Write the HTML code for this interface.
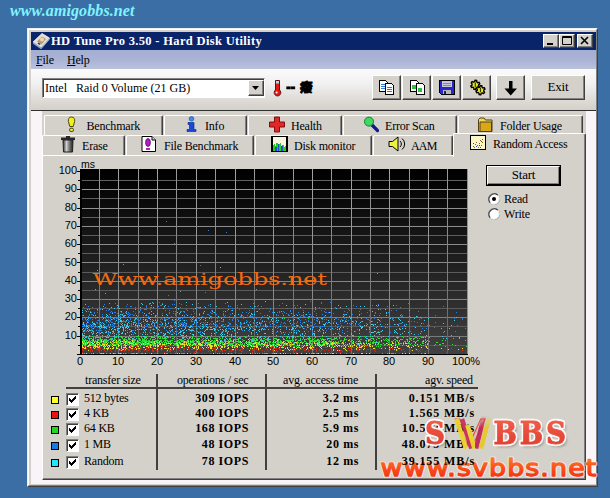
<!DOCTYPE html>
<html><head><meta charset="utf-8"><title>HD Tune Pro 3.50 - Hard Disk Utility</title>
<style>
html,body{margin:0;padding:0}
body{width:610px;height:498px;overflow:hidden;background:#3b6ea5;position:relative;font-family:"Liberation Serif",serif;font-size:12px;color:#000;line-height:14px;letter-spacing:-0.2px}
div,span{position:absolute;box-sizing:border-box;white-space:nowrap}
svg{position:absolute;overflow:visible}
.top{left:10px;top:1px;font:italic bold 16px/20px "Liberation Serif",serif;color:#7ff4ff;letter-spacing:0.1px}
.win{left:27px;top:28px;width:571px;height:459px;background:#d4d1ca;border:1px solid;border-color:#eeeef2 #404040 #404040 #eeeef2}
.win2{left:0;top:0;width:569px;height:457px;border:1px solid;border-color:#fff #808080 #808080 #fff}
.title{left:31px;top:32px;width:565px;height:18px;background:#0a246a;color:#fff;font:bold 12.5px/18px "Liberation Serif",serif;letter-spacing:0.33px}
.tbtn{top:34px;width:16px;height:14px;background:#d4d1ca;border:1px solid;border-color:#fff #404040 #404040 #fff;box-shadow:inset -1px -1px 0 #808080}
.menu{left:31px;top:50px;width:565px;height:19px;background:linear-gradient(#a4aed2,#aab4d6 55%,#bac2de)}
.tool{left:31px;top:69px;width:565px;height:41px;background:linear-gradient(#fbfbfb 0%,#f1f1f1 35%,#e3e1dd 65%,#d3d0c9 100%)}
.client{left:31px;top:110px;width:565px;height:374px;background:#f8f4f8;border-top:1px solid #303030}
.btn{background:#d4d1ca;border:1px solid;border-color:#fff #404040 #404040 #fff;box-shadow:inset -1px -1px 0 #808080}
.combo{left:42px;top:78px;width:223px;height:20px;background:#fff;border:1px solid;border-color:#808080 #fff #fff #808080;box-shadow:inset 1px 1px 0 #404040}
.tab{height:21px;background:#d4d1ca;border:1px solid;border-color:#fff #404040 transparent #fff;border-bottom:none;border-radius:2px 2px 0 0;box-shadow:inset -1px 0 0 #808080}
.tab span{top:3px}
.panel{left:42px;top:155px;width:544px;height:325px;background:#d4d1ca;border:1px solid;border-color:#fff #404040 #404040 #fff;box-shadow:inset -1px -1px 0 #808080}
.yl{letter-spacing:0;left:49px;width:28px;text-align:right;font:11px/14px "Liberation Sans",sans-serif}
.xl{letter-spacing:0;top:354px;width:30px;text-align:center;font:11px/14px "Liberation Sans",sans-serif}
.sq{left:51px;width:8px;height:8px;border:1px solid #000}
.cb{left:66px;width:13px;height:13px;background:#fff;border:1px solid;border-color:#808080 #fff #fff #808080;box-shadow:inset 1px 1px 0 #404040}
.lbl{left:84px}
.b{font-weight:bold;text-align:right;letter-spacing:0.6px;z-index:5}
.hd{top:373px}
</style></head><body>
<div class="top">www.amigobbs.net</div>
<div class="win"><div class="win2"></div></div>
<div class="title"><span style="left:20px">HD Tune Pro 3.50 - Hard Disk Utility</span></div>
<div class="tbtn" style="left:543px"><svg width="14" height="12" style="left:0;top:0"><path d="M3 8h6v2H3z" fill="#000"/></svg></div>
<div class="tbtn" style="left:559px"><svg width="14" height="12" style="left:0;top:0"><path d="M2.5 1.5h9v8h-9z M2 2.5h10" fill="none" stroke="#000"/></svg></div>
<div class="tbtn" style="left:577px"><svg width="14" height="12" style="left:0;top:0"><path d="M3 2l7 7M10 2l-7 7" stroke="#000" stroke-width="1.6" fill="none"/></svg></div>
<svg width="20" height="18" style="left:32px;top:32px"><path d="M1 10L10 1.500l7.500 4.500-8.500 9.500z" fill="#e4e0d4" stroke="#f4f4f4" stroke-width=".8"/><path d="M1 10l8 5.500v1.800l-8-5.500z" fill="#88a0d0"/><path d="M9 15.500l8.500-9.500v1.800l-8.500 9.500z" fill="#a8b8d8"/><path d="M5 9.500l5-5 4 2.500-4.500 5.500z" fill="#b89870"/><circle cx="10" cy="7.500" r="2" fill="#e8d8c0"/><path d="M6 11l2 1.500" stroke="#203040" stroke-width="1.500"/></svg>
<div class="menu"><span style="left:5px;top:3px"><u>F</u>ile</span><span style="left:36px;top:3px"><u>H</u>elp</span></div>
<div class="tool"></div>
<div class="client"></div>
<div class="combo"><span style="left:2px;top:2px;letter-spacing:0">Intel&nbsp;&nbsp; Raid 0 Volume (21 GB)</span><div class="btn" style="left:205px;top:1px;width:16px;height:16px"><svg width="14" height="14" style="left:0;top:0"><path d="M3 5h7l-3.5 4z" fill="#000"/></svg></div></div>
<svg width="11" height="18" style="left:272px;top:79px"><path d="M3.500 1.500h4v9.500a3.300 3.300 0 1 1-4 0z" fill="#e01818" stroke="#601010" stroke-width="1"/><path d="M4 2h3v2.500H4z" fill="#a8d8f0"/><circle cx="4.600" cy="13.500" r="1" fill="#fff"/></svg>
<span style="left:286px;top:80px;font:bold 15px/14px 'Liberation Serif',serif;letter-spacing:-0.6px;-webkit-text-stroke:0.4px #000;transform:scaleY(1.7);transform-origin:0 8.500px">--</span>
<span style="left:300px;top:80px;font:bold 12.500px/14px 'Noto Sans CJK TC','Noto Sans CJK SC',sans-serif;letter-spacing:0;-webkit-text-stroke:0.9px #000">癈</span>

<div class="btn" style="left:372px;top:75px;width:29px;height:25px"><svg width="17" height="16" style="left:5px;top:4px" shape-rendering="crispEdges"><path d="M1.5 .5h6l2 2v9h-8z" fill="#fff" stroke="#000"/><path d="M3 4h5M3 6h5M3 8h5" stroke="#2a7be0"/><path d="M7.500 3.500h6l2 2v9h-8z" fill="#fff" stroke="#000"/><path d="M9 7h5M9 9h5M9 11h5" stroke="#2a7be0"/></svg></div>
<div class="btn" style="left:402px;top:75px;width:29px;height:25px"><svg width="17" height="16" style="left:6px;top:4px" shape-rendering="crispEdges"><path d="M1.500 .5h6l2 2v9h-8z" fill="#fff" stroke="#000"/><path d="M3 5h4v4H3z" fill="#30c040"/><path d="M7.500 3.500h6l2 2v9h-8z" fill="#fff" stroke="#000"/><path d="M9 8h4v4H9z" fill="#30c040"/></svg></div>
<div class="btn" style="left:432px;top:75px;width:29px;height:25px"><svg width="16" height="16" style="left:6px;top:4px" shape-rendering="crispEdges"><path d="M.5 .5h15v14h-13l-2-2z" fill="#2828c8" stroke="#000"/><path d="M3 1h10v6H3z" fill="#c8c8d8"/><path d="M4 3h8M4 5h8" stroke="#8888a0"/><path d="M4 10h8v4H4z" fill="#b8b8b8"/><path d="M5 11h2v3H5z" fill="#202060"/></svg></div>
<div class="btn" style="left:462px;top:75px;width:29px;height:25px"><svg width="17" height="16" style="left:7px;top:4px"><g fill="#e8ec20" stroke="#000" stroke-width="1.400" stroke-linejoin="round"><path d="M8.5 5.9L9.4 6.9L8.4 8.3L7.1 7.6L6.0 8.1L5.6 9.5L3.9 9.3L3.8 7.9L2.9 7.1L1.5 7.5L0.8 5.9L2.0 5.1L2.1 3.9L1.2 2.9L2.2 1.5L3.5 2.2L4.6 1.7L5.0 0.3L6.7 0.5L6.8 1.9L7.7 2.7L9.1 2.3L9.8 3.9L8.6 4.7z"/><path d="M13.7 11.2L14.6 12.2L13.6 13.6L12.3 12.9L11.2 13.4L10.8 14.8L9.1 14.6L9.0 13.2L8.1 12.4L6.7 12.8L6.0 11.2L7.2 10.4L7.3 9.2L6.4 8.2L7.4 6.8L8.7 7.5L9.8 7.0L10.2 5.6L11.9 5.8L12.0 7.2L12.9 8.0L14.3 7.6L15.0 9.2L13.8 10.0z"/></g><path d="M5.300 2.500v4.500M10.500 7.800v4.500" stroke="#403800" stroke-width="1.200"/></svg></div>
<div class="btn" style="left:496px;top:75px;width:29px;height:25px"><svg width="14" height="15" style="left:7px;top:5px"><path d="M5 0h3.500v7.500H13L6.700 14.500 .5 7.500H5z" fill="#000"/></svg></div>
<div class="btn" style="left:531px;top:75px;width:54px;height:25px;text-align:center;line-height:22px;font-size:13px">Exit</div>

<div style="left:42px;top:111px;width:544px;height:46px;background:#d4d1ca"></div>
<!-- tabs row 1 -->
<div class="tab" style="left:44px;top:115px;width:119px"><svg width="9" height="16" style="left:22px;top:0"><path d="M4.500 1C7 1 8 3 7.600 5.500L6.200 10.500h-3.400L1.400 5.500C1 3 2 1 4.500 1z" fill="#f0f020" stroke="#484810"/><rect x="2.500" y="12.200" width="4" height="3.300" rx="1.500" fill="#f0f020" stroke="#484810"/></svg><span style="left:41.500px">Benchmark</span></div>
<div class="tab" style="left:164px;top:115px;width:83px"><svg width="11" height="16" style="left:21px;top:0"><circle cx="5.500" cy="2.800" r="2.300" fill="#3090f0" stroke="#1040a0" stroke-width=".6"/><path d="M2 6.500h6v7h2v2H1v-2h2.500v-5H2z" fill="#1848d8" stroke="#0a2080" stroke-width=".6"/></svg><span style="left:40px">Info</span></div>
<div class="tab" style="left:248px;top:115px;width:94px"><svg width="18" height="17" style="left:19px;top:0"><path d="M6.500 1h5v5h5v5h-5v5h-5v-5h-5v-5h5z" fill="#e02828" stroke="#801010"/></svg><span style="left:42px">Health</span></div>
<div class="tab" style="left:343px;top:115px;width:114px"><svg width="18" height="17" style="left:19px;top:0"><path d="M9 9l5.500 5.500" stroke="#101890" stroke-width="3.200" stroke-linecap="round"/><circle cx="6" cy="5.600" r="4.500" fill="#40d860" stroke="#108030"/></svg><span style="left:41px">Error Scan</span></div>
<div class="tab" style="left:458px;top:115px;width:125px"><svg width="17" height="16" style="left:18px;top:1px"><path d="M1.500 14.500v-12l1.500-1.500h4l1.500 2h6.500v11.500z" fill="#f0d860" stroke="#504010"/><path d="M3 5h11.500v9.500H3z" fill="#d8a818" stroke="#504010"/></svg><span style="left:41px">Folder Usage</span></div>
<!-- tabs row 2 -->
<div class="tab" style="left:42px;top:135px;width:83px"><svg width="16" height="17" style="left:17px;top:0"><defs><linearGradient id="tg"><stop offset="0" stop-color="#303030"/><stop offset=".35" stop-color="#d0d0d0"/><stop offset=".6" stop-color="#808080"/><stop offset="1" stop-color="#202020"/></linearGradient></defs><path d="M3 4h10l-.5 12h-9z" fill="url(#tg)" stroke="#202020"/><path d="M1 1.500h14v2.500H1z" fill="#282828"/><path d="M6 0h4v2H6z" fill="#282828"/></svg><span style="left:39px">Erase</span></div>
<div class="tab" style="left:126px;top:135px;width:128px"><svg width="16" height="17" style="left:14px;top:0"><path d="M1 .5h10l3.500 3.500v11.500H1z" fill="#fff" stroke="#000"/><path d="M11 .5v3.500h3.500" fill="#ddd" stroke="#000"/><ellipse cx="7" cy="6.500" rx="2.400" ry="4" fill="#b020c0" stroke="#500860" stroke-width=".8"/><rect x="5" y="12" width="4" height="2" fill="#b020c0"/></svg><span style="left:37px">File Benchmark</span></div>
<div class="tab" style="left:255px;top:135px;width:117px"><svg width="17" height="17" style="left:15px;top:0" shape-rendering="crispEdges"><path d="M1 .500h15v15H1z" fill="#f8f8d8" stroke="#000" stroke-width="1.400"/><path d="M2 15V9l2-1v2l1 1V7h2v4l2-4h1v4l1-2h2v2l2-2v6z" fill="#20d020"/><path d="M4 15v-4h2v4zM7 15V8h1v7zM10 15v-5h2v5z" fill="#2050d0"/></svg><span style="left:38px">Disk monitor</span></div>
<div class="tab" style="left:373px;top:135px;width:80px"><svg width="18" height="16" style="left:14px;top:0"><path d="M1 5.500h3.500L10 1v14L4.500 10.500H1z" fill="#f0f040" stroke="#000"/><path d="M12 5a4 4 0 0 1 0 6M14 2.500a7 7 0 0 1 0 11" fill="none" stroke="#000"/></svg><span style="left:37px;letter-spacing:-0.8px">AAM</span></div>
<div class="panel"></div>
<div class="tab" style="left:453px;top:133px;width:133px;height:24px;z-index:2"><svg width="16" height="16" style="left:16px;top:1px" shape-rendering="crispEdges"><path d="M.500 .500h15v14h-15z" fill="#fbf7c8" stroke="#000"/><path d="M3 11h1M5 9h1M4 12h1M7 10h1M6 7h1M8 12h1M9 8h1M10 5h1M11 10h1M12 7h1M10 12h1M12 4h1" stroke="#806020"/><path d="M3 8h1M6 11h1M9 10h1M11 6h1" stroke="#2040c0"/></svg><span style="left:39px;top:3px">Random Access</span></div>

<!-- chart -->
<span style="left:81px;top:158px;font:10.5px/12px 'Liberation Sans',sans-serif;letter-spacing:0">ms</span>
<div class="yl" style="top:328px">10</div><div class="yl" style="top:309px">20</div><div class="yl" style="top:291px">30</div><div class="yl" style="top:273px">40</div><div class="yl" style="top:255px">50</div><div class="yl" style="top:236px">60</div><div class="yl" style="top:218px">70</div><div class="yl" style="top:200px">80</div><div class="yl" style="top:181px">90</div><div class="yl" style="top:163px">100</div>
<div class="xl" style="left:65px">0</div><div class="xl" style="left:103px">10</div><div class="xl" style="left:142px">20</div><div class="xl" style="left:181px">30</div><div class="xl" style="left:220px">40</div><div class="xl" style="left:258px">50</div><div class="xl" style="left:297px">60</div><div class="xl" style="left:336px">70</div><div class="xl" style="left:374px">80</div><div class="xl" style="left:413px">90</div><div class="xl" style="left:451px">100%</div>
<div style="left:80px;top:169px;width:388px;height:186px;background:linear-gradient(#000 0%,#030303 6%,#1c1c1c 45%,#303030 75%,#424242 100%)"></div>
<svg width="388" height="186" style="left:80px;top:169px" shape-rendering="crispEdges">
<defs><linearGradient id="vg" gradientUnits="userSpaceOnUse" x1="0" y1="0" x2="0" y2="186"><stop offset="0" stop-color="#a2a2a2"/><stop offset=".6" stop-color="#8c8c8c"/><stop offset="1" stop-color="#747474"/></linearGradient><linearGradient id="vg2" gradientUnits="userSpaceOnUse" x1="0" y1="0" x2="0" y2="186"><stop offset="0" stop-color="#9a9a9a"/><stop offset=".6" stop-color="#7c7c7c"/><stop offset="1" stop-color="#606060"/></linearGradient></defs>
<path d="M0 176.5H388" stroke="#595959"/>
<path d="M0 167.5H388" stroke="#7b7b7b"/>
<path d="M0 157.5H388" stroke="#5a5a5a"/>
<path d="M0 148.5H388" stroke="#7f7f7f"/>
<path d="M0 139.5H388" stroke="#5b5b5b"/>
<path d="M0 130.5H388" stroke="#828282"/>
<path d="M0 121.5H388" stroke="#5b5b5b"/>
<path d="M0 112.5H388" stroke="#858585"/>
<path d="M0 103.5H388" stroke="#5c5c5c"/>
<path d="M0 93.5H388" stroke="#888888"/>
<path d="M0 84.5H388" stroke="#5d5d5d"/>
<path d="M0 75.5H388" stroke="#8b8b8b"/>
<path d="M0 66.5H388" stroke="#5e5e5e"/>
<path d="M0 57.5H388" stroke="#8e8e8e"/>
<path d="M0 48.5H388" stroke="#5f5f5f"/>
<path d="M0 39.5H388" stroke="#919191"/>
<path d="M0 29.5H388" stroke="#606060"/>
<path d="M0 20.5H388" stroke="#959595"/>
<path d="M0 11.5H388" stroke="#616161"/>
<path d="M19.5 0V186" stroke="url(#vg2)"/>
<path d="M38.5 0V186" stroke="url(#vg)"/>
<path d="M58.5 0V186" stroke="url(#vg2)"/>
<path d="M77.5 0V186" stroke="url(#vg)"/>
<path d="M96.5 0V186" stroke="url(#vg2)"/>
<path d="M116.5 0V186" stroke="url(#vg)"/>
<path d="M135.5 0V186" stroke="url(#vg2)"/>
<path d="M155.5 0V186" stroke="url(#vg)"/>
<path d="M174.5 0V186" stroke="url(#vg2)"/>
<path d="M193.5 0V186" stroke="url(#vg)"/>
<path d="M213.5 0V186" stroke="url(#vg2)"/>
<path d="M232.5 0V186" stroke="url(#vg)"/>
<path d="M251.5 0V186" stroke="url(#vg2)"/>
<path d="M271.5 0V186" stroke="url(#vg)"/>
<path d="M290.5 0V186" stroke="url(#vg2)"/>
<path d="M309.5 0V186" stroke="url(#vg)"/>
<path d="M329.5 0V186" stroke="url(#vg2)"/>
<path d="M348.5 0V186" stroke="url(#vg)"/>
<path d="M367.5 0V186" stroke="url(#vg2)"/>
<path d="M-3 185.5h3M-2 176.5h2M-3 167.5h3M-2 157.5h2M-3 148.5h3M-2 139.5h2M-3 130.5h3M-2 121.5h2M-3 112.5h3M-2 103.5h2M-3 93.5h3M-2 84.5h2M-3 75.5h3M-2 66.5h2M-3 57.5h3M-2 48.5h2M-3 39.5h3M-2 29.5h2M-3 20.5h3M-2 11.5h2M-3 2.5h3" stroke="#000"/>
<path d="M387.5 0V186" stroke="#909090"/>
<path d="M.5 0V186M1.500 0V186M0 185.5H388" stroke="#000"/>
<g stroke-width="1" fill="none" transform="translate(0,0.5)">
<path d="M50 145h1M232 163h1M27 157h1M143 158h1M256 154h1M53 142h1M214 136h1M136 137h1M91 158h1M335 158h1M180 156h1M32 150h1M166 143h1M260 152h1M13 163h1M134 148h1M131 149h1M21 154h1M119 151h1M34 157h1M9 156h1M180 150h1M286 154h1M24 155h1M346 159h1M311 141h1M36 151h1M113 142h1M84 150h1M168 161h1M289 163h1M26 158h1M58 154h1M55 158h1M293 155h1M139 139h1M94 74h1M23 164h1M246 161h1M193 147h1M236 146h1M15 156h1M125 161h1M136 155h1M122 147h1M33 156h1M271 152h1M55 153h1M19 141h1M294 149h1M305 155h1M53 154h1M192 160h1M93 144h1M160 158h1M37 160h1M212 155h1M60 148h1M115 151h1M149 165h1M219 150h1M42 146h1M143 146h1M239 158h1M53 161h1M160 154h1M193 157h1M66 137h1M26 148h1M377 156h1M46 143h1M80 150h1M209 163h1M61 157h1M196 156h1M20 139h1M236 149h1M17 158h1M59 142h1M33 154h1M173 134h1M260 151h1M71 164h1M279 154h1M64 148h1M189 153h1M65 148h1M154 160h1M12 164h1M185 160h1M153 149h1M16 157h1M95 144h1M168 144h1M255 159h1M4 162h1M7 148h1M231 147h1M26 141h1M145 155h1M141 163h1M223 146h1M149 150h1M150 137h1M137 156h1M171 165h1M6 162h1M169 141h1M294 155h1M262 161h1M96 163h1M264 149h1M106 155h1M95 146h1M313 149h1M118 157h1M119 149h1M40 154h1M10 148h1M105 157h1M69 156h1M163 158h1M149 159h1M222 154h1M36 149h1M339 150h1M58 158h1M72 154h1M125 123h1M125 153h1M178 157h1M100 149h1M245 155h1M8 160h1M140 158h1M58 155h1M242 145h1M148 159h1M38 151h1M86 150h1M125 156h1M129 160h1M321 154h1M2 157h1M94 154h1M96 159h1M17 154h1M61 139h1M259 165h1M54 150h1M124 154h1M34 143h1M265 145h1M41 153h1M186 157h1M239 138h1M41 143h1M17 141h1M92 161h1M214 154h1M121 153h1M13 156h1M102 157h1M227 155h1M24 158h1M78 137h1M179 140h1M217 149h1M28 150h1M118 134h1M273 152h1M171 145h1M30 163h1M85 153h1M29 158h1M86 161h1M250 143h1M65 146h1M102 155h1M277 160h1M14 144h1M168 155h1M264 145h1M98 149h1M220 147h1M75 150h1M51 137h1M60 141h1M291 149h1M161 147h1M101 135h1M49 163h1M42 156h1M209 146h1M135 144h1M43 152h1M338 142h1M106 136h1M273 136h1M42 157h1M13 154h1M61 153h1M136 152h1M234 142h1M237 152h1M85 156h1M84 149h1M29 145h1M281 149h1M77 139h1M47 135h1M129 146h1M151 141h1M47 161h1M66 150h1M37 163h1M30 156h1M30 149h1M40 147h1M295 143h1M287 143h1M111 156h1M29 153h1M22 145h1M20 157h1M107 141h1M90 163h1M130 154h1M32 162h1M175 156h1M48 143h1M24 135h1M31 153h1M173 157h1M13 155h1M89 143h1M86 158h1M136 145h1M183 156h1M104 157h1M98 140h1M235 157h1M120 138h1M231 153h1M241 133h1M35 146h1M169 143h1M152 151h1M217 136h1M144 147h1M17 153h1M157 158h1M244 142h1M118 138h1M201 163h1M185 154h1M58 153h1M385 159h1M52 163h1M104 142h1M17 143h1M213 141h1M211 156h1M289 141h1M80 136h1M132 144h1M251 155h1M139 154h1M132 152h1M47 140h1M158 152h1M88 153h1M12 162h1M133 155h1M32 157h1M7 152h1M292 152h1M119 158h1M162 161h1M137 149h1M225 157h1M279 148h1M297 150h1M31 142h1M128 136h1M267 143h1M262 152h1M47 155h1M322 157h1M22 150h1M90 158h1M156 155h1M155 162h1M180 148h1M152 150h1M217 148h1M103 151h1M149 154h1M112 157h1M166 151h1M102 153h1M223 153h1M106 156h1M307 158h1M281 144h1M157 136h1M13 148h1M244 150h1M11 158h1M22 153h1M25 138h1M363 137h1M100 161h1M2 143h1M237 157h1M84 138h1M108 157h1M161 145h1M297 137h1M97 162h1M70 164h1M111 151h1M54 153h1M125 138h1M340 156h1M60 164h1M143 142h1M55 150h1M30 152h1M118 149h1M245 140h1M275 156h1M3 157h1M241 134h1M93 151h1M119 163h1M47 145h1M40 150h1M330 162h1M193 154h1M110 150h1M210 142h1M24 148h1M60 149h1M289 146h1M230 153h1M295 144h1M222 146h1M158 160h1M184 146h1M210 141h1M12 138h1M179 153h1M111 160h1M225 150h1M49 160h1M85 150h1M191 150h1M19 147h1M208 146h1M99 152h1M186 156h1M95 145h1M76 152h1M322 147h1M343 154h1M66 140h1M64 154h1M261 150h1M374 149h1M30 151h1M99 144h1M20 156h1M92 162h1M86 52h1M45 159h1M177 153h1M170 147h1M150 159h1M32 153h1M172 158h1M10 149h1M162 148h1M183 157h1M170 137h1M287 139h1M153 157h1M69 155h1M97 151h1M236 144h1M76 164h1M124 157h1M29 148h1M10 157h1M281 157h1M250 133h1M88 149h1M169 147h1M45 161h1M349 156h1M31 160h1M123 157h1M12 159h1M29 160h1M11 145h1M105 156h1M113 140h1M112 165h1M318 155h1M67 156h1M179 154h1M123 150h1M111 152h1M234 155h1M116 155h1M277 147h1M80 155h1M57 147h1M331 152h1M258 157h1M39 146h1M41 151h1M314 161h1M148 153h1M12 152h1M173 154h1M235 154h1M197 159h1M63 152h1M111 145h1M2 150h1M218 156h1M228 158h1M59 154h1M20 155h1M136 158h1M174 154h1M180 155h1M236 151h1M197 143h1M86 155h1M311 148h1M75 158h1M47 157h1M8 142h1M2 146h1M28 147h1M30 143h1M316 141h1M157 138h1M154 146h1M207 139h1M273 156h1M131 152h1M112 160h1M74 154h1M167 155h1M181 149h1M67 154h1M173 159h1M35 152h1M142 155h1M66 145h1M244 147h1M23 137h1M316 136h1M50 150h1M99 156h1M287 150h1M157 156h1M25 151h1M52 145h1M279 146h1M196 153h1M216 156h1M176 163h1M6 142h1M133 143h1M301 149h1M37 144h1M6 158h1M292 148h1M279 156h1M14 143h1M163 154h1M80 152h1M315 155h1M355 153h1M279 142h1M199 136h1M348 156h1M180 144h1M175 137h1M48 151h1M5 150h1M204 143h1M343 148h1M114 151h1M106 140h1M67 151h1M219 145h1M165 139h1M74 155h1M71 158h1M6 151h1M46 148h1M125 155h1M292 136h1M66 146h1M111 139h1M26 157h1M237 151h1M220 153h1M307 137h1M300 144h1M64 158h1M159 140h1M275 155h1M142 152h1M179 162h1M96 140h1M201 153h1M28 163h1M192 143h1M55 152h1M134 160h1M44 147h1M48 158h1M176 149h1M205 157h1M16 153h1M123 156h1M170 152h1M214 150h1M85 152h1M267 162h1M246 150h1M71 138h1M264 142h1M99 145h1M220 158h1M104 147h1M354 158h1M35 161h1M94 148h1M324 155h1M184 152h1M33 162h1M41 157h1M38 161h1M187 139h1M11 160h1M37 139h1M11 161h1M69 158h1M172 147h1M286 149h1M143 162h1M85 155h1M127 159h1M99 155h1M79 155h1M100 151h1M264 146h1M205 163h1M14 148h1M190 139h1M4 155h1M125 148h1M77 153h1M347 156h1M158 151h1M275 162h1M251 148h1M263 151h1M72 156h1M39 163h1M119 139h1M178 148h1M117 162h1M131 144h1M72 160h1M48 153h1M137 160h1M152 139h1M382 149h1M223 147h1M94 155h1M51 155h1M169 162h1M89 141h1M206 159h1M129 149h1M57 158h1M206 160h1M65 162h1M98 155h1M181 160h1M59 143h1M25 149h1M63 158h1M54 163h1M66 157h1M312 150h1M59 157h1M71 136h1M119 157h1M23 158h1M113 149h1M7 156h1M232 142h1M128 145h1M8 147h1M177 137h1M273 153h1M114 162h1M3 155h1M147 157h1M213 154h1M300 162h1M212 166h1M106 151h1M55 159h1M174 143h1M226 160h1M169 160h1M238 150h1M253 144h1M272 145h1M100 142h1M77 157h1M29 163h1M55 138h1M208 150h1M117 138h1M32 143h1M302 148h1M48 145h1M176 158h1M55 140h1M175 121h1M199 142h1M45 152h1M264 153h1M190 152h1M82 150h1M222 158h1M255 138h1M120 163h1M73 159h1M94 131h1M215 139h1M56 146h1M103 161h1M62 143h1M88 126h1M38 158h1M256 149h1M216 158h1M163 147h1M154 147h1M19 155h1M310 157h1M246 143h1M66 138h1M22 158h1M79 133h1M57 150h1M70 152h1M21 161h1M143 152h1M95 150h1M268 151h1M87 163h1M53 146h1M39 152h1M96 158h1M123 143h1M81 149h1M28 164h1M127 145h1M313 148h1M272 154h1M143 144h1M167 152h1M24 159h1M5 159h1M17 140h1M8 156h1M188 150h1M103 155h1M149 155h1M16 164h1M338 165h1M18 161h1M221 146h1M102 156h1M8 153h1M121 149h1M49 152h1M241 141h1M223 145h1M132 141h1M141 156h1M99 134h1M276 137h1M116 148h1M43 144h1M112 158h1M148 136h1M14 158h1M68 144h1M196 163h1M258 150h1M164 154h1M56 156h1M195 152h1M309 156h1M170 155h1M82 134h1M49 154h1M164 153h1M203 142h1M91 147h1M95 142h1M49 146h1M269 141h1M45 143h1M238 148h1M337 153h1M49 156h1M6 155h1M376 143h1M51 156h1M46 156h1M92 135h1M56 148h1M220 155h1M329 147h1M181 153h1M181 161h1M60 140h1M228 162h1M247 154h1M220 151h1M25 152h1M289 153h1M11 143h1M131 155h1M145 134h1M26 150h1M228 143h1M188 84h1M116 158h1M190 155h1M147 141h1M150 154h1M89 144h1M146 63h1M121 148h1M170 158h1M300 152h1M184 159h1M68 158h1M226 148h1M95 153h1M176 153h1M60 150h1M45 153h1M28 156h1M130 137h1M207 151h1M232 159h1M194 155h1M41 145h1M17 151h1M186 152h1M12 150h1M322 146h1M298 135h1M248 159h1M100 138h1M173 153h1M277 149h1M91 153h1M123 153h1M6 154h1M46 152h1M12 145h1M310 163h1M74 157h1M232 157h1M4 157h1M72 153h1M128 148h1M9 140h1M69 134h1M68 149h1M190 140h1M92 151h1M76 146h1M131 141h1M233 147h1M250 154h1M202 144h1M150 145h1M69 135h1M119 144h1M242 150h1M53 165h1M136 157h1M228 147h1M64 159h1M224 147h1M228 156h1M135 158h1M10 142h1M189 142h1M15 149h1M120 156h1M21 157h1M87 150h1M170 156h1M288 150h1M50 149h1M363 163h1M231 156h1M63 146h1M342 159h1M355 146h1M143 145h1M69 143h1M28 141h1M45 155h1M215 138h1M375 162h1M146 162h1M382 150h1M111 162h1M29 151h1M256 153h1M12 155h1M25 148h1M178 136h1M302 157h1M25 161h1M300 140h1M299 146h1M220 165h1M233 157h1M225 145h1M155 159h1M44 152h1M62 158h1M261 156h1M26 153h1M209 152h1M112 152h1M88 137h1M253 153h1M11 156h1M101 154h1M66 136h1M8 151h1M219 158h1M289 159h1M102 149h1M143 151h1M281 152h1M5 149h1M128 61h1M120 162h1M81 156h1M93 142h1M266 150h1M9 145h1M69 144h1M51 154h1M114 144h1M148 137h1M64 144h1M161 154h1M5 160h1M334 157h1M167 146h1M160 156h1M246 153h1M23 154h1M94 135h1M35 154h1M20 148h1M50 137h1M119 146h1M131 147h1M260 154h1M250 157h1M12 157h1M50 160h1M20 161h1M177 142h1M116 139h1M35 143h1M65 157h1M93 163h1M198 146h1M19 151h1M234 150h1M176 154h1M157 150h1M9 146h1M81 153h1M217 153h1M18 163h1M95 154h1M341 157h1M250 147h1M55 144h1M114 154h1M54 146h1M254 152h1M204 156h1M80 163h1M280 156h1M223 141h1M208 145h1M163 149h1M142 162h1M10 143h1M224 159h1M3 159h1M65 140h1M5 161h1M242 157h1M190 157h1M33 161h1M141 152h1M66 155h1M344 161h1M116 153h1M34 150h1M110 156h1M30 155h1M77 155h1M124 137h1M40 142h1M161 155h1M104 146h1M176 142h1M115 148h1M110 147h1M211 161h1M43 162h1M35 134h1M128 158h1M236 157h1M248 153h1M216 154h1M70 160h1M240 158h1M81 136h1M186 158h1M262 163h1M217 152h1M52 161h1M159 148h1M182 152h1M245 143h1M129 157h1M152 162h1M120 96h1M228 151h1M230 132h1M77 146h1M22 147h1M150 155h1M218 143h1M289 151h1M14 155h1M71 155h1M37 148h1M255 156h1M28 155h1M3 138h1M244 157h1M321 147h1M134 159h1M198 158h1M169 153h1M51 157h1M183 139h1M149 147h1M199 157h1M82 155h1M230 156h1M82 144h1M34 149h1M134 155h1M59 151h1M230 145h1M198 157h1M180 154h1M105 154h1M139 151h1M298 162h1M112 155h1M40 158h1M267 159h1M278 155h1M235 148h1M184 160h1M162 143h1M101 142h1M320 138h1M253 160h1M89 161h1M46 137h1M74 160h1M9 160h1M161 158h1M37 149h1M49 144h1M216 161h1M34 155h1M103 154h1M70 138h1M2 149h1M276 153h1M257 155h1M221 157h1M68 147h1M6 159h1M58 151h1M213 145h1M242 152h1M204 153h1M111 149h1M109 161h1M16 161h1M319 160h1M147 156h1M269 154h1M104 155h1M258 155h1M336 147h1M206 144h1M212 147h1M10 155h1M203 154h1M255 149h1M75 153h1M229 145h1M267 157h1M70 140h1M103 142h1M42 152h1M43 146h1M145 161h1M143 150h1M72 150h1M119 138h1M201 164h1M226 152h1M181 137h1M77 148h1M160 155h1M37 154h1M38 140h1M104 143h1M123 155h1M176 156h1M137 151h1M179 158h1M113 159h1M3 161h1M30 164h1M248 143h1M140 148h1M20 140h1M48 147h1M88 163h1M102 161h1M87 162h1M104 160h1M242 160h1M129 155h1M191 151h1M76 153h1M196 146h1M205 154h1M328 134h1M182 147h1M135 166h1M320 154h1M321 145h1M259 162h1M85 141h1M173 149h1M2 141h1M143 155h1M79 139h1M240 162h1M160 147h1M109 160h1M268 140h1M91 156h1M99 149h1M142 156h1M187 149h1M110 157h1M64 161h1M90 139h1M228 152h1M270 155h1M196 145h1M232 147h1M308 143h1M40 145h1M5 141h1M216 145h1M341 149h1M106 145h1M280 140h1M71 154h1M7 153h1M33 148h1M107 157h1M18 151h1M100 154h1M61 159h1M240 157h1M8 137h1M148 157h1M6 156h1M64 140h1M47 154h1M182 151h1M334 152h1M199 143h1M337 147h1M199 148h1M32 155h1M114 152h1M133 159h1M265 151h1M130 143h1M319 154h1M237 161h1M162 146h1M2 155h1M200 155h1M29 140h1M84 151h1M37 138h1M202 134h1M69 163h1M145 146h1M43 151h1M289 162h1M147 148h1M181 154h1M312 149h1M298 160h1M117 159h1M171 147h1M275 151h1M181 159h1M89 149h1M287 148h1M99 151h1" stroke="#2a80e0"/>
<path d="M147 163h1M42 158h1M12 167h1M148 171h1M104 168h1M301 172h1M44 156h1M34 164h1M34 154h1M38 147h1M90 162h1M189 147h1M335 158h1M174 160h1M316 160h1M99 174h1M22 166h1M169 160h1M5 175h1M138 161h1M196 177h1M216 163h1M170 155h1M320 146h1M181 171h1M293 163h1M78 160h1M27 146h1M38 137h1M38 177h1M271 175h1M177 142h1M40 152h1M71 176h1M54 163h1M38 162h1M306 143h1M340 164h1M210 154h1M212 169h1M45 168h1M214 157h1M220 138h1M174 137h1M39 165h1M11 156h1M155 159h1M281 158h1M243 163h1M157 168h1M242 167h1M36 151h1M112 168h1M235 138h1M29 134h1M85 164h1M101 162h1M26 147h1M71 168h1M71 167h1M10 161h1M224 162h1M8 149h1M40 149h1M99 163h1M43 161h1M13 164h1M26 176h1M85 154h1M211 163h1M362 167h1M214 148h1M293 169h1M206 158h1M161 160h1M172 145h1M179 153h1M51 173h1M180 167h1M101 159h1M107 171h1M83 139h1M23 156h1M106 133h1M82 135h1M122 155h1M280 153h1M227 155h1M73 163h1M324 156h1M127 158h1M308 170h1M234 166h1M140 165h1M42 168h1M55 155h1M7 140h1M116 151h1M209 175h1M289 160h1M135 153h1M297 163h1M260 138h1M55 164h1M98 139h1M3 146h1M23 149h1M116 159h1M40 158h1M286 171h1M250 172h1M302 161h1M76 153h1M31 150h1M299 163h1M60 138h1M74 164h1M117 153h1M245 146h1M5 174h1M6 167h1M320 160h1M237 149h1M243 155h1M7 159h1M92 160h1M13 154h1M51 165h1M290 165h1M7 153h1M2 160h1M152 159h1M225 170h1M67 152h1M126 160h1M224 153h1M318 156h1M153 159h1M111 157h1M208 167h1M341 162h1M21 157h1M252 159h1M28 168h1M213 167h1M195 158h1M141 149h1M271 164h1M49 175h1M87 167h1M90 156h1M63 152h1M83 164h1M291 155h1M181 167h1M92 158h1M214 146h1M94 153h1M329 141h1M6 142h1M23 137h1M74 166h1M134 164h1M130 172h1M86 167h1M79 158h1M222 167h1M232 160h1M102 168h1M99 170h1M210 151h1M166 153h1M298 136h1M182 159h1M39 139h1M62 173h1M369 159h1M15 155h1M242 149h1M46 144h1M239 161h1M205 174h1M64 176h1M126 169h1M183 160h1M289 158h1M228 167h1M74 154h1M43 147h1M84 166h1M210 172h1M263 158h1M108 160h1M87 168h1M87 148h1M120 150h1M154 146h1M325 159h1M143 167h1M170 159h1M225 135h1M34 139h1M146 169h1M39 162h1M94 164h1M27 171h1M56 149h1M13 146h1M25 167h1M18 157h1M343 168h1M136 137h1M299 169h1M24 158h1M55 140h1M136 163h1M48 158h1M289 170h1M14 155h1M38 146h1M15 157h1M150 172h1M245 163h1M7 150h1M144 165h1M239 152h1M79 172h1M116 172h1M116 170h1M100 175h1M7 161h1M82 154h1M263 147h1M131 164h1M188 169h1M209 160h1M240 169h1M72 170h1M379 168h1M295 155h1M203 146h1M64 167h1M56 146h1M148 162h1M284 137h1M38 159h1M59 160h1M292 163h1M11 169h1M103 161h1M168 166h1M219 162h1M310 149h1M256 139h1M65 151h1M25 163h1M97 171h1M214 173h1M275 154h1M98 150h1M182 174h1M151 166h1M282 158h1M242 166h1M193 170h1M57 157h1M185 156h1M95 159h1M51 161h1M154 161h1M86 145h1M257 160h1M127 160h1M227 158h1M62 165h1M32 169h1M140 160h1M371 166h1M2 165h1M3 154h1M155 171h1M74 168h1M29 166h1M281 159h1M331 164h1M266 145h1M55 149h1M244 155h1M20 164h1M69 173h1M55 171h1M269 170h1M70 134h1M70 148h1M212 167h1M73 172h1M155 167h1M10 143h1M259 160h1M100 143h1M315 175h1M147 170h1M105 158h1M85 151h1M95 153h1M142 165h1M192 164h1M12 153h1M79 161h1M26 159h1M142 163h1M161 159h1M106 161h1M84 137h1M49 170h1M164 161h1M41 155h1M152 141h1M12 173h1M222 157h1M43 158h1M301 168h1M147 133h1M197 162h1M305 158h1M20 153h1M66 146h1M262 151h1M63 160h1M24 172h1M30 147h1M317 155h1M124 165h1M297 148h1M78 165h1M63 170h1M325 157h1M222 165h1M216 156h1M169 169h1M184 164h1M42 164h1M51 162h1M271 160h1M17 170h1M298 163h1M64 144h1M281 174h1M63 167h1M69 174h1M71 155h1M123 167h1M42 145h1M175 160h1M26 145h1M374 151h1M126 173h1M334 149h1M38 153h1M191 150h1M95 156h1M128 170h1M74 163h1M7 157h1M81 163h1M135 156h1M235 140h1M293 156h1M63 163h1M61 157h1M105 167h1M134 143h1M49 160h1M26 168h1M84 159h1M307 155h1M53 155h1M73 138h1M279 168h1M232 165h1M27 166h1M294 171h1M3 153h1M73 144h1M286 167h1M90 168h1M80 167h1M300 155h1M150 160h1M125 172h1M35 160h1M177 171h1M160 169h1M23 154h1M295 162h1M87 146h1M155 164h1M4 156h1M186 170h1M26 163h1M182 152h1M232 171h1M246 167h1M98 153h1M218 161h1M84 158h1M235 167h1M91 165h1M46 157h1M69 149h1M301 157h1M115 151h1M43 160h1M192 160h1M324 162h1M225 164h1M38 172h1M85 156h1M296 164h1M37 161h1M105 170h1M2 170h1M212 159h1M207 168h1M271 158h1M75 147h1M52 172h1M280 167h1M327 170h1M187 157h1M255 169h1M131 160h1M334 165h1M313 136h1M266 152h1M145 142h1M41 167h1M21 163h1M121 173h1M12 161h1M21 156h1M55 150h1M73 160h1M22 140h1M38 144h1M4 169h1M202 149h1M64 158h1M342 168h1M346 172h1M239 167h1M243 164h1M90 175h1M31 160h1M188 160h1M281 149h1M30 169h1M132 142h1M282 152h1M140 171h1M61 134h1M41 142h1M85 165h1M62 135h1M274 162h1M120 165h1M239 154h1M124 164h1M98 173h1M45 165h1M248 151h1M22 163h1M258 136h1M341 154h1M123 164h1M270 149h1M122 163h1M45 164h1M294 162h1M112 135h1M160 157h1M22 174h1M33 163h1M104 163h1M227 156h1M212 158h1M151 165h1M164 158h1M214 163h1M17 140h1M319 159h1M101 166h1M68 172h1M154 167h1M65 160h1M53 153h1M74 156h1M348 149h1M174 151h1M139 158h1M294 166h1M17 163h1M131 166h1M234 162h1M95 150h1M171 164h1M66 160h1M64 161h1M250 160h1M174 145h1M165 148h1M255 175h1M123 158h1M113 155h1M157 163h1M335 168h1M137 152h1M220 166h1M24 155h1M230 160h1M254 177h1M308 167h1M88 163h1M196 170h1M83 172h1M84 148h1M99 160h1M171 157h1M102 166h1M172 172h1M65 163h1M124 142h1M344 161h1M314 161h1M100 165h1M110 158h1M121 148h1M16 164h1M75 151h1M76 158h1M45 158h1M241 149h1M27 151h1M286 173h1M45 161h1M340 148h1M124 162h1M11 163h1M152 144h1M112 148h1M132 160h1M280 137h1M5 168h1M127 155h1M61 156h1M4 175h1M3 159h1M172 161h1M269 147h1M25 158h1M146 161h1M241 173h1M95 138h1M93 169h1M187 146h1M142 168h1M177 167h1M138 175h1M11 171h1M371 156h1M177 153h1M41 151h1M46 158h1M60 154h1M318 149h1M240 159h1M40 157h1M272 152h1M77 144h1M103 166h1M200 167h1M143 161h1M185 157h1M65 165h1M196 151h1M220 171h1M292 155h1M126 155h1M73 153h1M9 166h1M278 175h1M211 144h1M313 171h1M13 159h1M85 136h1M47 159h1M34 166h1M17 148h1M142 160h1M54 153h1M145 162h1M15 146h1M291 152h1M256 176h1M39 173h1M50 162h1M203 163h1M177 168h1M239 153h1M301 175h1M376 148h1M66 152h1M122 166h1M264 164h1M29 158h1M333 169h1M113 165h1M204 165h1M224 166h1M41 152h1M185 164h1M249 153h1M267 166h1M89 159h1M127 167h1M130 160h1M181 160h1M59 156h1M57 171h1M200 160h1M279 145h1M103 156h1M230 159h1M170 146h1M141 156h1M38 168h1M88 154h1M55 161h1M242 160h1M45 170h1M69 171h1M208 172h1M267 154h1M170 173h1M72 171h1M36 165h1M28 171h1M158 160h1M192 162h1M314 155h1M253 173h1M313 151h1M212 168h1M215 159h1M65 168h1M130 135h1M258 174h1M12 165h1M200 162h1M238 162h1M127 153h1M65 150h1M299 151h1M44 146h1M282 157h1M173 161h1M6 156h1M159 160h1M54 172h1M76 166h1M61 167h1M292 142h1M178 161h1M305 140h1M188 149h1M266 137h1M73 151h1M209 152h1M8 158h1M317 164h1M168 156h1M279 160h1M336 147h1M183 172h1M257 158h1M2 143h1M55 156h1M252 174h1M172 139h1M147 164h1M364 162h1M39 159h1M98 164h1M41 164h1M34 158h1M87 157h1M176 170h1M82 146h1M320 151h1M233 158h1M47 154h1M20 159h1M102 161h1M198 151h1M245 159h1M47 156h1M141 166h1M303 167h1M161 135h1M84 151h1M118 163h1M26 151h1M110 164h1M244 170h1M243 174h1M177 155h1M30 155h1M77 165h1M263 145h1M328 152h1M112 150h1M229 168h1M70 150h1M49 166h1M84 165h1M10 173h1M296 173h1M217 146h1M143 150h1M286 156h1M73 134h1M42 156h1M46 142h1M117 170h1M51 174h1M144 171h1M54 151h1M34 160h1M102 169h1M21 158h1M144 157h1M346 166h1M153 167h1M57 156h1M213 159h1M20 157h1M100 151h1M77 171h1M90 172h1M126 157h1M52 169h1M256 154h1M8 169h1M184 167h1M114 153h1M120 154h1M70 161h1M71 136h1M48 153h1M56 154h1M39 170h1M248 169h1M123 144h1M104 160h1M51 152h1M26 162h1M56 167h1M133 159h1M279 161h1M179 154h1M217 156h1M158 145h1M363 154h1M260 158h1M197 170h1M192 149h1M2 166h1M322 159h1M147 166h1M54 173h1M206 136h1M233 164h1M216 164h1M87 163h1M99 144h1M46 151h1M131 158h1M48 168h1M6 157h1M173 171h1M249 143h1M45 146h1M29 140h1M34 173h1M101 155h1M265 152h1M213 151h1M54 176h1M179 162h1M83 166h1M118 170h1M28 165h1M2 174h1M237 170h1M138 147h1M109 168h1M112 165h1M113 147h1M110 177h1M379 169h1M176 157h1M234 164h1M9 167h1M248 153h1M177 165h1M175 177h1M29 170h1M32 164h1M121 166h1M177 173h1M39 150h1M272 166h1M100 162h1M78 164h1M179 160h1M49 169h1M314 163h1M111 161h1M3 155h1M76 172h1M68 155h1M129 149h1M201 142h1M328 163h1M48 157h1M366 169h1M115 139h1M243 170h1M63 148h1M234 165h1M2 175h1M229 147h1M238 174h1M322 164h1M130 147h1M344 151h1M255 164h1M20 155h1M189 167h1M260 152h1M169 158h1M217 167h1M213 168h1M97 169h1M196 166h1M184 174h1M103 163h1M164 154h1M211 160h1M296 136h1M38 163h1M106 166h1M253 154h1M19 158h1M37 159h1M292 167h1M245 154h1M218 149h1M2 164h1M4 161h1M104 153h1M279 171h1M319 150h1M192 154h1M70 158h1M105 159h1M42 163h1M298 150h1M38 150h1M110 172h1M38 156h1M96 154h1M202 168h1M56 169h1M32 159h1M134 160h1M28 162h1M171 163h1M146 159h1M43 159h1M197 153h1M14 154h1M345 168h1M228 149h1M2 141h1M326 155h1M21 170h1M40 151h1M322 153h1M254 150h1M13 170h1M110 157h1M96 165h1M92 165h1M85 168h1M64 169h1M3 166h1M279 177h1M192 152h1M172 171h1M187 169h1M157 158h1M287 155h1M185 155h1M226 145h1M72 133h1M221 156h1M361 159h1M113 161h1M161 146h1M100 156h1M91 161h1M271 154h1M13 162h1M98 157h1M89 164h1M15 171h1M67 165h1M19 157h1M102 146h1M40 145h1M140 98h1M97 143h1M48 170h1M160 153h1M306 146h1M92 150h1M122 159h1M75 172h1M122 157h1M316 163h1M125 168h1M260 166h1M120 159h1M125 138h1M214 161h1M166 159h1M271 165h1M299 165h1M8 162h1M286 160h1M61 155h1M194 143h1M294 146h1M58 166h1M47 150h1M159 172h1M212 160h1M24 157h1M125 151h1M109 160h1M61 160h1M103 168h1M153 176h1M244 156h1M271 148h1M4 164h1M142 167h1M119 145h1M91 157h1M95 162h1M3 162h1M47 163h1M182 171h1M9 161h1M125 161h1M103 164h1M24 174h1M276 152h1M109 158h1M5 135h1M253 165h1M113 166h1M38 167h1M103 173h1M301 162h1M16 166h1M306 144h1M286 169h1M95 152h1M33 149h1M137 169h1M42 154h1M33 162h1M125 149h1M148 140h1M258 164h1M34 167h1M133 154h1M223 159h1M196 169h1M280 157h1M223 143h1M102 175h1M141 164h1M112 161h1M31 138h1M251 139h1M157 159h1M76 159h1M75 169h1M266 148h1M37 136h1M46 156h1M106 168h1M134 161h1M315 162h1M110 161h1M100 163h1M50 173h1M77 151h1M148 156h1M106 154h1M222 164h1M175 174h1M130 158h1M207 171h1M120 138h1M211 167h1M64 156h1M196 149h1M214 150h1M72 152h1M107 169h1M327 167h1M32 162h1M243 161h1M242 172h1M284 156h1M119 169h1M259 159h1M297 157h1M57 160h1M329 147h1M127 173h1M82 155h1M115 150h1M9 140h1M71 142h1M107 146h1M279 164h1M135 160h1M185 132h1M200 157h1M47 157h1M71 145h1M75 146h1M297 153h1M330 148h1M17 166h1M44 155h1M32 144h1M222 170h1M239 160h1M47 155h1M217 157h1M180 168h1M104 151h1M23 158h1M155 166h1M66 168h1M296 158h1M176 163h1M208 165h1M75 171h1M28 152h1M134 159h1M320 165h1M22 176h1M294 159h1M145 160h1M261 167h1M59 170h1M4 166h1M291 163h1M171 144h1M184 152h1M30 163h1M298 140h1M254 169h1M63 150h1" stroke="#3cd0e8"/>
<path d="M64 174h1M317 168h1M247 173h1M244 176h1M101 172h1M262 174h1M363 174h1M214 184h1M239 175h1M36 175h1M93 176h1M12 176h1M251 172h1M82 174h1M107 172h1M324 172h1M134 171h1M273 176h1M40 173h1M281 174h1M73 172h1M123 173h1M283 174h1M57 173h1M57 175h1M293 170h1M20 173h1M2 174h1M43 172h1M214 175h1M102 174h1M37 174h1M148 174h1M152 172h1M223 168h1M138 176h1M23 171h1M29 184h1M41 172h1M28 173h1M103 174h1M123 172h1M227 169h1M246 174h1M304 175h1M240 175h1M25 172h1M33 173h1M68 173h1M79 167h1M168 176h1M184 175h1M286 184h1M85 177h1M215 171h1M106 172h1M2 175h1M331 169h1M18 175h1M171 173h1M164 175h1M163 177h1M53 173h1M25 171h1M37 172h1M154 176h1M138 172h1M26 172h1M278 169h1M239 171h1M176 120h1M101 184h1M46 173h1M218 173h1M270 184h1M2 172h1M128 171h1M155 167h1M130 168h1M31 176h1M23 173h1M315 170h1M19 174h1M217 173h1M84 176h1M347 171h1M248 172h1M75 174h1M16 173h1M126 176h1M231 184h1M21 176h1M331 174h1M104 168h1M206 169h1M214 174h1M70 170h1M201 176h1M181 175h1M125 175h1M236 174h1M48 169h1M211 175h1M38 166h1M245 173h1M67 175h1M212 175h1M56 176h1M117 173h1M52 170h1M83 175h1M300 175h1M108 175h1M273 166h1M78 168h1M42 174h1M126 184h1M242 170h1M36 174h1M180 176h1M224 171h1M77 184h1M59 184h1M40 170h1M313 184h1M18 171h1M250 184h1M57 167h1M155 170h1M121 175h1M11 176h1M200 174h1M315 173h1M156 172h1M230 173h1M316 175h1M178 173h1M85 170h1M43 171h1M217 174h1M198 184h1M27 168h1M146 172h1M58 167h1M27 176h1M237 171h1M162 170h1M175 169h1M373 169h1M276 176h1M158 184h1M40 167h1M34 170h1M176 174h1M228 169h1M192 175h1M297 173h1M176 175h1M73 173h1M111 173h1M61 174h1M24 177h1M251 173h1M149 175h1M43 170h1M172 169h1M289 171h1M64 173h1M37 175h1M105 175h1M232 172h1M150 170h1M173 171h1M233 172h1M52 173h1M211 176h1M63 171h1M305 170h1M135 172h1M194 169h1M11 175h1M151 174h1M148 172h1M175 172h1M80 184h1M229 172h1M22 172h1M6 171h1M100 171h1M203 170h1M209 175h1M162 172h1M17 170h1M46 168h1M258 173h1M219 176h1M230 169h1M285 176h1M318 175h1M249 175h1M90 173h1M203 169h1M127 175h1M17 174h1M10 175h1M9 174h1M58 169h1M172 177h1M187 170h1M30 170h1M174 171h1M174 173h1M43 95h1M13 174h1M42 168h1M89 172h1M179 172h1M249 171h1M41 174h1M184 171h1M86 114h1M159 172h1M45 176h1M200 173h1M157 168h1M322 170h1M85 175h1M80 168h1M285 171h1M185 172h1M170 170h1M54 171h1M107 175h1M273 170h1M258 174h1M275 173h1M30 184h1M48 175h1M51 184h1M67 172h1M192 173h1M153 172h1M88 168h1M263 177h1M53 175h1M112 171h1M172 184h1M185 170h1M205 175h1M137 171h1M287 175h1M137 184h1M104 174h1M151 168h1M330 169h1M84 168h1M193 174h1M43 174h1M48 170h1M286 172h1M257 174h1M59 169h1M310 175h1M177 170h1M211 171h1M155 177h1M229 176h1M159 175h1M55 170h1M228 149h1M12 171h1M142 184h1M96 174h1M174 170h1M216 184h1M281 175h1M96 175h1M136 175h1M182 184h1M69 174h1M69 175h1M83 172h1M17 184h1M215 168h1M226 170h1M3 172h1M145 175h1M365 177h1M47 175h1M334 172h1M166 173h1M155 175h1M47 171h1M14 175h1M52 175h1M188 168h1M231 172h1M359 175h1M253 175h1M36 172h1M253 170h1M5 176h1M211 173h1M170 176h1M284 175h1M243 173h1M117 176h1M271 171h1M39 174h1M255 173h1M226 173h1M265 173h1M218 176h1M80 174h1M299 172h1M92 173h1M86 175h1M290 173h1M225 172h1M110 171h1M256 176h1M94 168h1M33 167h1M85 173h1M283 173h1M139 184h1M329 174h1M258 172h1M3 170h1M255 172h1M121 173h1M118 170h1M242 175h1M158 172h1M118 171h1M232 174h1M212 171h1M286 173h1M229 173h1M49 176h1M196 172h1M102 177h1M85 172h1M97 172h1M320 170h1M37 173h1M48 172h1M54 175h1M333 170h1M178 175h1M253 174h1M170 174h1M189 170h1M140 172h1M50 176h1M240 169h1M300 177h1M91 174h1M6 172h1M29 177h1M335 174h1M70 175h1M81 172h1M45 177h1M84 173h1M167 177h1M327 172h1M132 174h1M64 169h1M88 173h1M62 172h1M301 175h1M317 167h1M98 175h1M86 169h1M63 175h1M30 173h1M30 175h1M65 171h1M24 175h1M241 173h1M232 175h1M291 171h1M53 172h1M100 174h1M60 176h1M276 172h1M326 170h1M12 167h1M20 176h1M218 178h1M242 169h1M117 169h1M286 177h1M202 177h1M65 172h1M33 171h1M20 168h1M77 169h1M203 174h1M278 172h1M187 173h1M288 172h1M10 174h1M285 168h1M185 175h1M153 173h1M245 184h1M315 172h1M75 176h1M58 174h1M34 168h1M60 177h1M17 171h1M263 175h1M317 169h1M134 173h1M27 174h1M156 170h1M189 174h1M262 173h1M386 177h1M176 169h1M242 173h1M266 170h1M39 176h1M230 174h1M10 173h1M218 167h1M304 171h1M129 173h1M144 170h1M49 172h1M44 173h1M167 175h1M146 174h1M145 171h1M55 174h1M140 174h1M62 169h1M186 175h1M65 167h1M198 172h1M36 168h1M29 170h1M115 174h1M14 172h1M152 175h1M94 172h1M212 169h1M5 175h1M195 184h1M116 171h1M125 172h1M45 184h1M62 173h1M76 171h1M6 174h1M54 173h1M47 172h1M136 176h1M269 175h1M256 184h1M149 173h1M244 184h1M108 171h1M216 174h1M158 171h1M31 173h1M110 174h1M288 171h1M100 170h1M139 174h1M212 172h1M140 169h1M262 176h1M35 172h1M292 174h1M183 169h1M236 184h1M16 172h1M297 175h1M311 175h1M190 175h1M50 184h1M272 174h1M333 169h1M67 174h1M122 172h1M66 171h1M82 168h1M239 174h1M173 169h1M59 173h1M112 173h1M342 172h1M115 175h1M198 173h1M13 169h1M76 173h1M142 174h1M209 108h1M129 177h1M128 175h1M54 184h1M119 174h1M319 171h1M2 173h1M339 169h1M21 173h1M314 170h1M237 176h1M197 174h1M186 177h1M121 176h1M115 176h1M60 171h1M138 175h1M70 169h1M175 171h1M73 168h1M110 173h1M16 174h1M168 172h1M75 175h1M34 173h1M165 173h1M69 172h1M330 170h1M235 174h1M18 170h1M114 169h1M7 173h1M33 172h1M280 172h1M53 184h1M73 175h1M24 173h1M158 173h1M145 170h1M83 169h1M362 171h1M5 171h1M219 175h1M7 184h1M204 175h1M131 171h1M151 171h1M17 176h1M56 167h1M55 175h1M107 169h1M87 171h1M61 167h1M58 184h1M7 174h1M72 173h1M131 174h1M135 175h1M124 171h1M34 171h1M49 174h1M249 169h1M246 175h1M179 168h1M64 171h1M349 172h1M273 167h1M236 171h1M141 173h1M172 175h1M86 171h1M105 170h1M298 175h1M234 169h1M189 172h1M335 176h1M46 174h1M307 174h1M148 175h1M186 184h1M172 170h1M63 174h1M26 170h1M20 169h1M272 171h1M225 170h1M186 170h1M174 174h1M26 171h1M224 172h1M201 175h1M13 177h1M65 173h1M158 175h1M63 184h1M82 175h1M157 174h1M278 170h1M108 172h1M78 173h1M385 171h1M58 173h1M51 168h1M66 170h1M277 170h1M103 172h1M168 173h1M121 168h1M342 174h1M182 175h1M322 167h1M150 184h1M150 174h1M160 173h1M238 172h1M26 184h1M32 175h1M308 170h1M53 169h1M90 184h1M266 184h1M181 169h1M185 184h1M64 170h1M106 174h1M261 174h1M112 175h1M13 171h1M118 169h1M164 167h1M319 175h1M57 184h1M69 171h1M292 169h1M237 184h1M263 172h1M131 172h1M31 174h1M269 171h1M259 168h1M189 175h1M290 167h1M239 167h1M12 172h1M77 167h1M24 170h1M44 172h1M14 173h1M10 169h1M34 184h1M318 174h1M8 176h1M121 171h1M181 172h1M6 175h1M41 176h1M213 171h1M104 170h1M59 170h1M40 171h1M80 177h1M191 177h1M104 184h1M228 174h1M169 172h1M69 167h1M40 175h1M181 177h1M183 175h1M35 184h1M327 174h1M114 172h1M173 172h1M87 184h1M260 172h1M116 170h1M329 169h1M51 171h1M137 175h1M34 175h1M125 173h1M296 170h1M68 172h1M297 104h1M69 173h1M58 172h1M77 173h1M245 174h1M108 174h1M158 170h1M116 184h1M51 177h1M5 173h1M153 170h1M30 169h1M35 170h1M134 169h1M60 184h1M244 173h1M25 173h1M250 169h1M223 173h1M130 184h1M155 172h1M111 176h1M36 167h1M9 171h1M340 175h1M97 169h1M39 173h1M289 177h1M62 184h1M170 175h1M28 176h1M247 170h1M35 175h1M337 175h1M131 184h1M229 170h1M205 184h1M250 174h1M122 176h1M323 168h1M53 174h1M55 171h1M342 173h1M159 173h1M15 168h1M273 173h1M152 174h1M149 170h1M118 174h1M17 101h1M147 177h1M62 171h1M294 173h1M172 174h1M61 175h1M57 176h1M51 173h1M132 173h1M151 177h1M49 175h1M247 177h1M249 172h1M199 170h1M277 175h1M255 174h1M9 175h1M84 169h1M97 173h1M207 172h1M133 169h1M226 175h1M270 172h1M12 175h1M13 176h1M133 172h1M213 175h1M329 184h1M72 167h1M334 169h1M265 175h1M130 174h1M4 176h1M173 170h1M30 172h1M217 172h1M3 168h1M147 176h1M72 174h1M316 171h1M345 171h1M137 170h1M190 172h1M323 173h1M259 169h1M277 174h1M43 184h1M171 174h1M210 173h1M318 173h1M293 172h1M64 172h1M254 177h1M209 172h1M209 171h1M20 170h1M142 175h1M65 169h1M156 175h1M246 172h1M180 170h1M113 175h1M65 174h1M231 176h1M267 175h1M78 177h1M238 173h1M184 169h1M175 176h1M77 174h1M295 173h1M354 176h1M330 175h1M128 173h1M23 184h1M80 171h1M137 169h1M113 173h1M202 174h1M101 175h1M308 184h1M186 176h1M139 173h1M8 168h1M251 170h1M234 184h1M336 172h1M25 174h1M143 184h1M209 176h1M54 176h1M89 177h1M279 172h1M134 172h1M46 171h1M4 171h1M279 174h1M231 171h1M130 175h1M88 172h1M105 172h1M17 168h1M337 169h1M149 184h1M158 169h1M126 174h1M91 171h1M171 171h1M110 175h1M108 173h1M343 171h1M214 177h1M309 169h1M144 172h1M201 172h1M114 175h1M159 168h1M218 177h1M2 184h1M151 184h1M312 173h1M272 176h1M193 176h1M112 172h1M229 174h1M282 176h1M187 175h1M80 172h1M90 171h1M191 184h1M194 177h1M13 172h1M79 169h1M247 184h1M115 167h1M360 175h1M11 184h1M33 175h1M205 171h1M193 169h1M239 172h1M10 172h1M93 174h1M207 175h1M141 177h1M151 175h1M54 168h1M242 167h1M22 176h1M132 176h1M292 173h1M26 173h1M101 170h1M160 174h1M56 175h1M237 174h1M203 184h1M166 176h1M316 168h1M71 175h1M149 169h1M169 174h1M36 177h1M264 169h1M200 176h1M47 174h1M82 169h1M336 168h1M41 168h1M278 167h1M169 171h1M317 171h1M241 176h1M78 171h1M66 174h1M260 184h1M150 176h1M263 173h1M124 174h1M50 173h1M222 173h1M118 173h1M291 169h1M219 171h1M315 174h1M196 169h1M148 171h1M265 170h1M154 170h1M66 175h1M274 176h1M168 175h1M280 173h1M78 167h1M5 170h1M297 168h1M36 171h1M241 175h1M56 177h1M242 172h1M317 177h1M81 173h1M20 171h1M9 172h1M179 184h1M61 172h1M188 176h1M45 175h1M194 173h1M141 171h1M50 170h1M99 173h1M227 175h1M122 175h1M38 175h1M232 171h1M112 169h1M155 171h1M306 171h1M126 171h1M204 149h1M41 177h1M111 172h1M164 174h1M210 171h1M235 171h1M321 174h1M105 173h1M215 170h1M261 171h1M71 178h1M116 174h1M3 174h1M2 176h1M119 175h1M79 174h1M62 170h1M129 171h1M178 174h1M294 171h1M157 170h1M241 177h1M235 175h1M32 174h1M60 174h1M276 174h1M118 184h1M151 167h1M328 174h1M312 184h1M196 170h1M137 173h1M91 176h1M155 176h1M20 175h1M243 171h1M36 173h1M15 172h1M44 175h1M64 168h1M107 173h1M81 171h1M61 168h1M73 177h1M166 168h1M254 170h1M279 177h1M234 173h1M161 184h1M58 177h1M94 170h1M139 177h1M20 184h1M23 176h1M209 173h1M34 169h1M232 184h1M220 169h1M52 184h1M127 174h1M161 176h1M135 174h1M43 176h1M99 184h1M153 174h1M171 170h1M33 174h1M271 172h1M280 174h1M4 173h1M256 169h1M44 169h1M188 170h1M312 174h1M301 172h1M45 170h1M244 170h1M194 175h1M165 167h1M190 170h1M151 172h1M220 170h1M343 176h1M130 173h1M70 176h1M257 170h1M38 171h1M10 177h1M94 175h1M309 184h1M243 172h1M245 172h1M119 176h1M122 174h1M88 176h1M41 184h1M135 176h1M192 176h1M122 170h1M313 176h1M115 184h1M96 176h1M3 173h1M308 173h1M195 169h1M125 170h1M56 173h1M189 173h1M150 171h1M375 176h1M128 174h1M95 174h1M338 171h1M104 172h1M113 172h1M164 171h1M342 168h1M226 174h1M343 174h1M298 169h1M86 184h1M39 184h1M179 169h1M26 175h1M231 175h1M38 177h1M3 171h1M74 173h1M115 171h1M139 175h1M293 174h1M4 174h1M125 174h1M177 175h1M222 170h1M345 170h1M206 176h1M225 174h1M43 173h1M41 175h1M53 171h1M12 170h1M72 175h1M176 173h1M140 176h1M142 172h1M53 170h1M98 173h1M49 173h1M69 176h1M168 177h1M120 174h1M136 171h1M253 172h1M203 176h1M252 177h1M179 174h1M27 171h1M32 184h1M250 175h1M120 167h1M239 176h1M137 172h1M68 171h1M50 172h1M288 170h1M118 172h1M162 174h1M347 175h1M198 174h1M60 173h1M287 169h1M73 176h1M198 176h1M145 168h1M52 176h1M66 172h1M72 168h1M355 175h1M136 170h1M244 174h1M70 172h1M2 168h1M142 169h1M341 168h1M87 174h1M356 173h1M180 175h1M142 168h1M357 173h1M259 174h1M145 177h1M135 169h1M192 184h1M210 177h1M101 174h1M241 170h1M19 178h1M103 184h1M84 171h1M311 172h1M53 176h1M321 170h1M238 175h1M344 184h1M254 173h1M173 175h1M257 173h1M136 169h1M319 174h1M231 174h1M195 173h1M161 167h1M160 168h1M149 174h1M185 168h1M334 184h1M96 173h1M318 168h1M127 167h1M132 171h1M327 171h1M184 184h1M238 171h1M216 170h1M201 174h1M194 171h1M15 120h1M74 176h1M232 170h1M31 171h1M255 177h1M273 184h1M204 170h1M44 176h1M16 168h1M110 177h1M141 172h1M21 171h1M263 171h1M78 174h1M200 171h1M312 172h1M129 174h1M142 177h1M272 173h1M95 184h1M145 184h1M259 177h1M196 176h1M201 173h1M187 171h1M188 172h1M209 168h1M112 167h1M167 173h1M221 172h1M134 174h1M347 174h1M123 171h1M238 176h1M210 184h1M82 176h1M305 175h1M68 175h1M296 172h1M2 177h1M38 176h1M299 173h1M252 173h1M264 171h1M139 170h1M191 176h1M103 169h1M181 174h1M311 184h1M212 168h1M169 173h1M2 170h1M196 175h1M230 176h1M290 170h1M230 171h1M55 150h1M12 174h1M193 172h1M309 175h1M128 167h1M94 176h1M192 177h1M84 174h1M150 169h1M90 174h1M221 184h1M133 174h1M2 171h1M283 176h1M298 177h1M307 176h1M17 173h1M198 171h1M145 172h1M48 173h1M292 176h1M293 173h1M100 122h1M296 177h1M24 174h1M66 167h1M265 168h1M345 175h1M243 176h1M144 176h1M197 173h1M208 171h1M182 172h1M259 166h1M99 172h1M31 169h1M193 173h1M98 171h1M145 174h1M57 174h1M199 173h1M345 177h1M177 173h1M110 184h1M307 184h1M315 184h1M216 177h1M62 174h1M6 173h1M150 172h1M306 169h1M97 177h1M156 174h1M77 172h1M185 174h1M194 184h1M102 110h1M51 175h1M333 177h1M154 173h1M19 175h1M228 170h1M233 170h1M332 176h1M107 176h1M100 173h1M335 173h1M165 168h1M95 172h1M334 175h1M22 170h1M206 171h1M333 172h1M159 169h1M95 175h1M21 170h1M64 175h1M130 170h1M121 177h1M150 175h1M196 174h1M18 168h1M61 184h1M164 176h1M287 176h1M7 171h1M205 173h1M32 170h1M19 173h1M190 173h1M197 171h1M127 168h1M173 176h1M80 169h1M75 171h1M56 174h1M92 171h1M235 168h1M183 173h1M45 173h1M281 170h1M63 170h1M73 174h1M175 184h1M71 172h1M317 172h1M74 175h1M113 174h1M9 173h1M67 184h1M140 173h1M313 171h1M85 171h1M127 169h1M119 173h1M177 184h1M66 177h1M229 184h1M241 171h1M213 174h1M25 175h1M148 173h1M257 175h1M320 174h1M177 176h1M163 171h1M74 170h1M341 184h1M109 174h1M323 175h1M122 173h1M187 174h1M206 167h1M2 169h1M23 174h1M20 172h1M50 168h1M227 174h1M209 169h1M193 175h1M127 177h1M119 172h1M48 184h1M51 176h1M109 169h1M46 170h1M24 172h1M97 171h1M35 173h1M118 175h1M138 177h1M218 171h1M204 172h1M82 173h1M198 175h1M116 172h1M325 173h1M237 173h1M181 170h1M349 168h1M176 171h1M234 171h1M52 171h1M304 176h1M207 167h1M110 168h1M162 175h1M341 176h1M180 171h1M64 176h1M111 169h1M97 184h1M137 174h1M57 177h1M236 172h1M147 170h1M171 167h1M331 171h1M5 174h1M211 174h1M157 172h1M372 175h1M322 176h1M197 172h1M25 170h1M302 184h1M67 176h1M325 172h1M254 168h1M70 173h1M345 173h1M161 175h1M22 168h1M52 177h1M89 174h1M85 169h1M222 176h1M40 174h1M252 170h1M303 174h1M67 169h1M22 184h1M229 171h1M308 171h1M289 184h1M254 174h1M168 174h1M160 175h1M102 184h1M303 170h1M19 168h1M147 172h1M319 172h1M209 174h1M313 167h1M75 172h1M72 171h1M72 172h1M123 169h1M59 171h1M207 174h1M16 184h1M19 176h1M223 169h1M215 173h1M177 174h1M13 168h1M284 167h1M298 173h1M195 172h1M247 169h1M101 171h1M108 170h1M13 184h1M25 124h1M157 176h1M31 170h1M200 172h1M279 175h1M307 172h1M45 174h1M217 175h1M62 175h1M188 171h1M15 169h1M6 168h1M102 172h1M238 170h1M86 173h1M8 172h1M202 184h1M245 170h1M94 174h1M113 171h1M102 171h1M172 167h1M4 175h1M9 169h1M221 173h1M295 174h1M244 171h1M54 170h1M142 173h1M44 170h1M363 169h1M203 175h1M348 172h1M109 175h1M340 167h1M171 172h1M266 176h1M289 174h1M323 174h1M279 168h1M47 173h1M13 175h1M260 171h1M72 170h1M264 170h1M228 176h1M186 173h1M88 174h1M64 184h1M212 170h1M210 176h1M229 169h1M53 177h1M152 184h1M114 174h1M139 168h1M87 172h1M254 169h1M337 171h1M309 171h1M278 174h1M63 172h1M97 175h1M76 184h1M161 173h1M44 184h1M187 184h1M79 173h1M207 176h1M24 171h1M348 174h1M5 177h1M362 174h1M274 175h1M96 172h1M197 175h1M256 168h1M27 172h1M290 175h1M9 170h1M221 176h1M125 171h1M30 176h1M328 173h1M235 172h1M130 169h1M3 175h1M145 167h1M74 174h1M160 184h1M84 184h1M73 170h1M27 175h1M42 169h1M15 171h1M60 170h1M284 174h1M250 173h1M103 171h1M248 174h1M38 173h1M224 170h1M219 174h1M44 178h1M307 170h1M234 172h1M230 172h1M154 177h1M280 170h1M56 184h1M161 177h1M59 175h1M92 169h1M66 173h1M80 167h1M170 173h1M252 176h1M11 171h1M256 174h1M143 173h1M133 173h1M92 167h1M183 171h1M8 177h1M35 168h1M365 171h1M4 184h1" stroke="#2cdc38"/>
<path d="M253 180h1M91 174h1M41 179h1M176 177h1M152 177h1M65 180h1M94 176h1M104 177h1M338 177h1M322 184h1M149 172h1M39 176h1M134 175h1M2 178h1M247 175h1M315 178h1M254 174h1M106 175h1M216 176h1M178 178h1M13 178h1M144 177h1M281 177h1M113 179h1M104 176h1M107 180h1M42 172h1M47 179h1M121 176h1M199 175h1M27 179h1M259 181h1M18 175h1M15 178h1M11 173h1M7 173h1M273 172h1M176 176h1M27 180h1M136 176h1M90 175h1M14 176h1M194 178h1M274 184h1M308 175h1M8 177h1M201 177h1M204 174h1M210 180h1M221 176h1M30 184h1M29 176h1M87 181h1M254 177h1M238 176h1M55 178h1M125 175h1M325 174h1M46 179h1M179 175h1M33 184h1M345 184h1M18 178h1M194 181h1M234 173h1M186 176h1M178 180h1M52 179h1M280 174h1M56 175h1M265 180h1M136 180h1M2 177h1M44 178h1M282 177h1M240 176h1M98 179h1M347 179h1M32 172h1M309 178h1M126 178h1M249 176h1M230 177h1M5 175h1M199 176h1M276 179h1M131 174h1M107 178h1M232 180h1M53 175h1M274 175h1M171 176h1M81 177h1M210 177h1M130 178h1M343 172h1M45 174h1M91 176h1M207 179h1M286 177h1M117 178h1M175 174h1M117 172h1M120 176h1M209 178h1M176 173h1M101 178h1M98 176h1M97 174h1M161 177h1M138 177h1M57 172h1M312 177h1M265 177h1M136 177h1M188 176h1M77 177h1M41 178h1M263 179h1M38 175h1M228 176h1M36 171h1M14 177h1M137 179h1M2 172h1M68 177h1M83 175h1M141 178h1M104 175h1M87 180h1M301 171h1M156 177h1M46 172h1M84 184h1M163 176h1M170 176h1M241 177h1M35 180h1M143 175h1M61 179h1M2 173h1M130 172h1M99 178h1M253 178h1M206 175h1M368 180h1M169 173h1M80 175h1M378 180h1M280 180h1M185 173h1M253 174h1M67 174h1M26 175h1M24 175h1M110 172h1M140 179h1M202 178h1M34 176h1M177 178h1M89 174h1M77 173h1M92 178h1M10 178h1M50 178h1M197 171h1M119 175h1M210 173h1M90 180h1M78 177h1M158 175h1M78 176h1M178 174h1M68 179h1M17 172h1M58 177h1M212 180h1M77 180h1M316 180h1M44 175h1M116 178h1M148 178h1M134 176h1M90 179h1M2 181h1M261 177h1M326 174h1M188 178h1M59 179h1M36 179h1M109 177h1M130 179h1M217 176h1M118 178h1M195 173h1M142 178h1M74 174h1M268 177h1M237 175h1M12 174h1M199 180h1M233 178h1M23 175h1M153 180h1M128 178h1M328 176h1M65 173h1M200 177h1M114 179h1M244 184h1M274 176h1M239 173h1M125 177h1M338 184h1M257 177h1M227 179h1M109 176h1M241 175h1M316 181h1M93 180h1M73 181h1M56 184h1M278 178h1M289 175h1M36 173h1M323 174h1M327 177h1M217 180h1M203 181h1M52 171h1M9 175h1M282 184h1M13 184h1M39 180h1M43 180h1M240 178h1M80 184h1M43 179h1M157 177h1M112 176h1M163 179h1M130 175h1M42 180h1M23 177h1M332 181h1M231 179h1M311 175h1M48 173h1M63 184h1M164 177h1M82 175h1M148 176h1M227 176h1M244 175h1M279 176h1M13 174h1M186 178h1M37 178h1M241 184h1M272 177h1M110 175h1M102 175h1M113 175h1M203 173h1M28 176h1M131 179h1M65 184h1M265 178h1M9 176h1M252 184h1M270 179h1M201 184h1M135 176h1M174 174h1M128 171h1M37 179h1M312 174h1M176 175h1M17 173h1M162 177h1M235 176h1M310 179h1M135 179h1M38 176h1M222 178h1M346 178h1M90 178h1M5 178h1M203 184h1M157 178h1M17 178h1M187 177h1M127 176h1M259 176h1M317 177h1M326 176h1M198 170h1M75 177h1M203 176h1M100 175h1M5 174h1M169 181h1M135 175h1M290 175h1M166 172h1M80 177h1M108 172h1M230 178h1M17 175h1M75 174h1M6 184h1M197 177h1M214 178h1M191 176h1M7 174h1M50 179h1M70 176h1M202 173h1M74 179h1M84 175h1M121 177h1M77 175h1M130 177h1M333 177h1M107 184h1M56 179h1M90 184h1M52 177h1M129 175h1M315 177h1M45 176h1M200 184h1M8 181h1M59 173h1M117 180h1M49 173h1M258 176h1M88 174h1M77 176h1M280 178h1M24 179h1M102 178h1M329 184h1M106 174h1M273 184h1M99 184h1M206 174h1M64 178h1M99 173h1M103 175h1M16 174h1M223 177h1M284 177h1M21 172h1M202 181h1M315 176h1M97 175h1M232 177h1M229 178h1M58 179h1M144 178h1M26 179h1M27 176h1M252 175h1M134 177h1M114 178h1M147 174h1M256 173h1M85 179h1M264 179h1M116 177h1M46 176h1M208 180h1M112 178h1M232 179h1M170 184h1M108 178h1M122 176h1M148 179h1M84 179h1M32 175h1M120 174h1M317 178h1M79 173h1M132 174h1M156 175h1M278 174h1M279 180h1M104 180h1M173 177h1M252 174h1M247 177h1M155 176h1M168 170h1M183 175h1M41 181h1M233 180h1M227 174h1M347 175h1M5 179h1M15 176h1M97 178h1M193 172h1M22 175h1M71 173h1M41 174h1M137 173h1M312 173h1M33 176h1M131 178h1M248 174h1M173 174h1M75 179h1M200 176h1M174 177h1M124 176h1M193 175h1M144 174h1M289 176h1M59 184h1M121 175h1M295 175h1M256 176h1M217 184h1M222 174h1M13 171h1M176 179h1M175 173h1M276 177h1M130 174h1M108 179h1M89 181h1M230 179h1M226 174h1M252 173h1M217 178h1M130 176h1M30 179h1M169 175h1M276 180h1M79 172h1M86 174h1M24 176h1M104 173h1M71 184h1M288 171h1M336 180h1M292 177h1M253 184h1M45 173h1M32 177h1M24 180h1M137 171h1M281 178h1M284 175h1M128 179h1M93 184h1M270 176h1M79 175h1M190 176h1M196 184h1M277 178h1M4 179h1M281 184h1M115 175h1M183 177h1M198 175h1M279 178h1M204 177h1M114 174h1M184 176h1M270 177h1M41 177h1M335 173h1M246 174h1M135 174h1M167 175h1M249 177h1M220 178h1M286 184h1M229 175h1M172 179h1M319 179h1M196 179h1M97 184h1M69 180h1M115 178h1M63 175h1M89 179h1M97 176h1M52 174h1M298 174h1M129 184h1M224 176h1M251 178h1M195 176h1M167 177h1M309 184h1M70 177h1M2 176h1M45 178h1M78 184h1M104 172h1M123 179h1M251 174h1M63 174h1M152 180h1M73 176h1M329 178h1M205 179h1M140 172h1M101 177h1M21 184h1M86 179h1M129 176h1M166 174h1M154 178h1M94 178h1M219 178h1M80 174h1M81 179h1M306 174h1M203 178h1M44 171h1M170 179h1M182 174h1M63 180h1M242 172h1M205 184h1M86 177h1M137 178h1M17 184h1M180 179h1M152 176h1M199 178h1M45 172h1M213 178h1M145 173h1M184 175h1M241 179h1M273 174h1M50 174h1M268 171h1M23 179h1M152 178h1M179 173h1M10 176h1M68 174h1M246 173h1M23 172h1M148 173h1M318 179h1M131 176h1M56 180h1M215 173h1M118 179h1M119 174h1M318 173h1M223 178h1M177 177h1M214 180h1M21 176h1M98 178h1M175 176h1M138 176h1M197 175h1M40 184h1M40 172h1M75 176h1M45 177h1M212 175h1M70 178h1M194 184h1M193 181h1M16 184h1M187 176h1M49 177h1M33 171h1M192 177h1M210 175h1M335 176h1M174 179h1M33 179h1M17 177h1M178 179h1M207 174h1M147 179h1M234 174h1M30 173h1M345 173h1M32 179h1M171 177h1M27 174h1M122 173h1M102 174h1M93 179h1M251 175h1M226 180h1M159 176h1M278 172h1M132 177h1M33 178h1M82 179h1M329 172h1M53 173h1M314 178h1M237 174h1M346 177h1M85 177h1M49 174h1M247 174h1M43 178h1M313 174h1M331 178h1M209 181h1M286 174h1M133 184h1M67 177h1M28 179h1M216 179h1M106 173h1M263 174h1M160 172h1M96 174h1M161 180h1M199 179h1M38 184h1M269 174h1M55 174h1M52 172h1M221 184h1M161 173h1M25 177h1M253 181h1M311 178h1M74 172h1M34 173h1M70 175h1M193 176h1M131 177h1M39 171h1M208 173h1M190 177h1M219 176h1M18 173h1M8 173h1M49 178h1M103 179h1M341 178h1M233 184h1M147 184h1M337 175h1M231 178h1M320 179h1M245 184h1M314 180h1M239 175h1M283 174h1M216 173h1M176 178h1M181 174h1M21 171h1M245 172h1M89 177h1M243 175h1M207 178h1M203 172h1M325 184h1M4 172h1M190 180h1M20 178h1M264 176h1M142 177h1M35 176h1M289 184h1M26 173h1M128 175h1M226 176h1M101 175h1M63 178h1M267 175h1M290 177h1M281 179h1M153 172h1M120 175h1M51 179h1M118 177h1M132 181h1M148 184h1M309 180h1M141 177h1M8 176h1M38 177h1M284 179h1M220 179h1M27 177h1M153 171h1M74 173h1M118 174h1M19 174h1M294 179h1M3 174h1M3 178h1M238 184h1M305 179h1M283 180h1M16 177h1M28 178h1M14 173h1M220 180h1M51 174h1M61 175h1M126 171h1M266 181h1M257 181h1M48 178h1M88 179h1M227 178h1M144 175h1M65 175h1M45 180h1M201 178h1M382 179h1M242 176h1M108 174h1M288 174h1M26 176h1M55 175h1M100 174h1M262 173h1M122 178h1M311 176h1M7 177h1M39 179h1M107 176h1M162 178h1M36 178h1M244 181h1M66 177h1M301 179h1M23 184h1M14 179h1M24 178h1M141 180h1M68 178h1M293 179h1M239 177h1M328 177h1M140 174h1M29 177h1M226 184h1M220 173h1M15 177h1M361 179h1M15 175h1M19 177h1M118 175h1M255 175h1M136 171h1M98 177h1M140 176h1M213 175h1" stroke="#e4e42c"/>
<path d="M113 184h1M117 183h1M9 184h1M47 179h1M223 180h1M50 177h1M330 182h1M312 180h1M214 179h1M99 179h1M10 181h1M270 181h1M2 179h1M72 181h1M40 180h1M236 179h1M232 179h1M51 182h1M278 178h1M87 179h1M274 180h1M4 177h1M153 178h1M295 180h1M83 176h1M272 180h1M258 181h1M68 179h1M236 181h1M294 181h1M56 176h1M291 180h1M131 184h1M100 182h1M287 180h1M126 184h1M267 182h1M24 181h1M5 180h1M195 179h1M103 177h1M13 179h1M250 178h1M178 178h1M111 180h1M66 180h1M108 177h1M119 180h1M196 178h1M10 177h1M45 181h1M120 179h1M199 184h1M193 181h1M335 179h1M233 177h1M27 182h1M123 180h1M189 184h1M363 181h1M269 178h1M39 181h1M18 181h1M213 184h1M59 180h1M17 184h1M152 181h1M178 181h1M215 181h1M90 182h1M2 183h1M161 182h1M213 176h1M104 179h1M104 180h1M48 184h1M275 179h1M155 179h1M193 178h1M213 181h1M89 181h1M206 176h1M79 176h1M149 180h1M59 184h1M150 181h1M204 177h1M181 178h1M108 179h1M217 180h1M342 180h1M211 180h1M32 184h1M60 184h1M279 181h1M31 180h1M152 184h1M45 179h1M54 179h1M124 178h1M166 184h1M159 184h1M276 184h1M67 181h1M278 179h1M161 180h1M42 181h1M245 176h1M12 182h1M172 180h1M138 184h1M312 179h1M337 181h1M250 179h1M55 184h1M321 180h1M245 177h1M200 177h1M220 180h1M94 179h1M234 180h1M115 180h1M101 177h1M35 182h1M3 179h1M44 181h1M64 181h1M4 178h1M214 181h1M186 179h1M15 179h1M361 184h1M32 180h1M99 176h1M256 179h1M244 184h1M48 180h1M151 180h1M98 179h1M114 177h1M24 180h1M209 178h1M164 184h1M240 182h1M58 180h1M69 178h1M201 184h1M31 182h1M220 178h1M54 180h1M201 177h1M69 184h1M316 178h1M87 180h1M186 175h1M86 177h1M37 178h1M235 180h1M254 180h1M156 179h1M213 180h1M18 180h1M58 181h1M11 179h1M47 180h1M60 179h1M190 179h1M131 180h1M323 184h1M49 181h1M213 179h1M164 178h1M93 184h1M157 180h1M371 179h1M329 180h1M219 177h1M118 184h1M78 179h1M142 182h1M160 180h1M130 182h1M172 183h1M345 182h1M274 184h1M161 178h1M175 176h1M284 180h1M67 179h1M99 177h1M68 181h1M56 177h1M72 180h1M328 178h1M248 181h1M51 180h1M211 181h1M69 177h1M35 181h1M38 178h1M239 181h1M204 180h1M317 181h1M281 179h1M216 183h1M129 184h1M7 184h1M127 179h1M115 178h1M43 177h1M299 179h1M3 184h1M272 178h1M281 180h1M224 179h1M274 178h1M55 180h1M52 178h1M121 184h1M221 179h1M349 180h1M231 180h1M202 184h1M224 181h1M66 179h1M304 178h1M278 181h1M299 178h1M280 180h1M121 179h1M17 180h1M310 179h1M91 181h1M103 180h1M170 178h1M103 179h1M153 181h1M261 178h1M280 177h1M63 177h1M76 184h1M197 184h1M82 178h1M50 179h1M11 180h1M228 182h1M115 182h1M63 180h1M333 184h1M107 178h1M162 177h1M94 176h1M69 180h1M78 182h1M128 179h1M183 178h1M331 181h1M324 176h1M117 179h1M16 184h1M338 182h1M43 179h1M265 181h1M160 181h1M8 180h1M272 184h1M59 178h1M100 180h1M196 179h1M124 184h1M182 181h1M23 180h1M335 184h1M332 184h1M187 181h1M317 180h1M34 178h1M88 180h1M199 180h1M80 184h1M30 176h1M82 179h1M103 181h1M44 179h1M242 180h1M28 180h1M48 178h1M91 176h1M221 180h1M19 182h1M260 183h1M233 181h1M90 179h1M25 182h1M246 178h1M277 180h1M82 184h1M143 184h1M18 179h1M61 178h1M192 180h1M109 180h1M335 180h1M142 181h1M50 184h1M268 179h1M196 181h1M295 179h1M249 183h1M82 180h1M64 184h1M191 178h1M85 184h1M104 182h1M109 182h1M74 178h1M109 177h1M150 184h1M241 180h1M96 178h1M10 179h1M73 182h1M147 184h1M245 178h1M239 180h1M20 178h1M21 181h1M73 184h1M27 176h1M194 179h1M87 177h1M116 184h1M29 184h1M48 181h1M241 175h1M46 184h1M273 178h1M27 184h1M286 182h1M44 184h1M334 184h1M59 181h1M80 177h1M176 179h1M174 179h1M82 177h1M72 182h1M216 176h1M160 184h1M29 178h1M225 181h1M87 182h1M269 181h1M122 184h1M215 180h1M320 179h1M117 184h1M205 178h1M195 182h1M229 176h1M116 181h1M63 176h1M11 178h1M244 181h1M149 184h1M323 180h1M170 180h1M267 181h1M89 179h1M57 179h1M176 180h1M112 180h1M30 181h1M81 180h1M19 181h1M151 182h1M211 177h1M129 181h1M173 181h1M159 178h1M73 179h1M21 177h1M73 178h1M271 181h1M132 179h1M134 179h1M211 179h1M277 181h1M184 182h1M221 177h1M252 182h1M76 181h1M264 184h1M191 184h1M18 177h1M214 176h1M99 181h1M185 180h1M136 181h1M162 182h1M243 184h1M120 181h1M16 180h1M61 179h1M46 178h1M89 182h1M140 182h1M172 181h1M292 180h1M149 182h1M3 181h1M286 177h1M81 178h1M321 181h1M298 178h1M72 184h1M138 177h1M155 182h1M101 182h1M130 184h1M208 184h1M90 184h1M24 184h1M144 181h1M75 184h1M281 182h1M108 182h1M223 178h1M133 179h1M122 180h1M221 178h1M192 177h1M339 181h1M128 180h1M121 177h1M22 180h1M125 177h1M52 180h1M246 180h1M25 179h1M138 182h1M117 178h1M94 182h1M162 179h1M261 181h1M185 177h1M308 184h1M340 182h1M9 177h1M78 184h1M319 184h1M200 181h1M200 180h1M49 180h1M55 176h1M243 178h1M198 184h1M233 180h1M65 177h1M207 184h1M96 180h1M60 178h1M63 184h1M23 179h1M338 184h1M86 182h1M37 177h1M99 178h1M120 178h1M134 180h1M295 182h1M219 180h1M80 180h1M74 184h1M158 184h1M68 177h1M382 181h1M125 180h1M27 178h1M19 180h1M294 184h1M27 181h1M230 180h1M338 180h1M197 182h1M141 181h1M262 182h1M91 184h1M140 180h1M187 180h1M60 180h1M12 181h1M145 181h1M366 184h1M183 184h1M128 182h1M141 176h1M278 184h1M270 184h1M84 183h1M89 177h1M347 178h1M198 179h1M39 179h1M2 181h1M340 180h1M167 179h1M228 180h1M135 179h1M9 178h1M288 180h1M226 177h1M67 184h1M81 181h1M315 177h1M52 181h1M10 182h1M241 181h1M6 179h1M330 180h1M66 182h1M2 180h1M260 181h1M36 180h1M44 182h1M114 183h1M342 184h1M228 176h1M324 182h1M270 179h1M233 179h1M236 182h1M73 181h1M114 184h1M199 179h1M269 177h1M188 182h1M228 181h1M60 182h1M72 179h1M294 178h1M90 181h1M35 180h1M40 181h1M248 184h1M58 184h1M255 181h1M20 179h1M37 176h1M100 177h1M159 181h1M221 176h1M302 178h1M162 180h1M192 181h1M49 176h1M234 178h1" stroke="#d42a1a"/>
</g>
</svg>
<svg width="260" height="24" style="left:88px;top:266px"><text x="0" y="0" transform="translate(4.500,19) scale(1.435,1)" font-family="'DejaVu Serif',serif" font-size="17" fill="#f26a10">Www.amigobbs.net</text></svg>

<div class="btn" style="left:487px;top:166px;width:73px;height:19px;border-color:#fff #000 #000 #fff;outline:1px solid #000;text-align:center;line-height:16px;font-size:13px">Start</div>
<svg width="12" height="12" style="left:488px;top:193px"><circle cx="6" cy="6" r="5.500" fill="#fff" stroke="#808080"/><path d="M2.200 9.800A5.400 5.400 0 0 1 9.800 2.200" fill="none" stroke="#404040" stroke-width="1.200"/><path d="M2.200 9.800A5.400 5.400 0 0 0 9.800 2.200" fill="none" stroke="#fff"/><circle cx="6" cy="6" r="2" fill="#000"/></svg>
<span style="left:504px;top:192px">Read</span>
<svg width="12" height="12" style="left:488px;top:208px"><circle cx="6" cy="6" r="5.500" fill="#fff" stroke="#808080"/><path d="M2.200 9.800A5.400 5.400 0 0 1 9.800 2.200" fill="none" stroke="#404040" stroke-width="1.200"/><path d="M2.200 9.800A5.400 5.400 0 0 0 9.800 2.200" fill="none" stroke="#fff"/></svg>
<span style="left:504px;top:207px">Write</span>

<!-- table -->
<span class="hd" style="left:85px">transfer size</span>
<span class="hd" style="left:177px">operations / sec</span>
<span class="hd" style="left:283px">avg. access time</span>
<span class="hd" style="left:425px">agv. speed</span>
<div style="left:66px;top:387px;width:412px;height:2px;background:#404040"></div>
<div style="left:156px;top:374px;width:2px;height:96px;background:#404040"></div>
<div style="left:265px;top:374px;width:2px;height:96px;background:#404040"></div>
<div style="left:375px;top:374px;width:2px;height:96px;background:#404040"></div>

<div class="sq" style="top:396px;background:#ffff20"></div><div class="cb" style="top:393px"><svg width="11" height="11" style="left:0;top:0" shape-rendering="crispEdges"><path d="M2 4v3l2 2 5-5V1L4 6z" fill="#000"/></svg></div><span class="lbl" style="top:391px">512 bytes</span>
<div class="sq" style="top:411px;background:#f01010"></div><div class="cb" style="top:408px"><svg width="11" height="11" style="left:0;top:0" shape-rendering="crispEdges"><path d="M2 4v3l2 2 5-5V1L4 6z" fill="#000"/></svg></div><span class="lbl" style="top:406px">4 KB</span>
<div class="sq" style="top:426px;background:#20d820"></div><div class="cb" style="top:423px"><svg width="11" height="11" style="left:0;top:0" shape-rendering="crispEdges"><path d="M2 4v3l2 2 5-5V1L4 6z" fill="#000"/></svg></div><span class="lbl" style="top:421px">64 KB</span>
<div class="sq" style="top:442px;background:#1878e8"></div><div class="cb" style="top:439px"><svg width="11" height="11" style="left:0;top:0" shape-rendering="crispEdges"><path d="M2 4v3l2 2 5-5V1L4 6z" fill="#000"/></svg></div><span class="lbl" style="top:437px">1 MB</span>
<div class="sq" style="top:459px;background:#20e8f8"></div><div class="cb" style="top:456px"><svg width="11" height="11" style="left:0;top:0" shape-rendering="crispEdges"><path d="M2 4v3l2 2 5-5V1L4 6z" fill="#000"/></svg></div><span class="lbl" style="top:454px">Random</span>

<span class="b" style="right:361px;top:391px">309 IOPS</span><span class="b" style="right:251px;top:391px">3.2 ms</span><span class="b" style="right:135px;top:391px;letter-spacing:0.9px">0.151 MB/s</span>
<span class="b" style="right:361px;top:406px">400 IOPS</span><span class="b" style="right:251px;top:406px">2.5 ms</span><span class="b" style="right:135px;top:406px;letter-spacing:0.9px">1.565 MB/s</span>
<span class="b" style="right:361px;top:421px">168 IOPS</span><span class="b" style="right:251px;top:421px">5.9 ms</span><span class="b" style="right:135px;top:421px;letter-spacing:0.9px">10.533 MB/s</span>
<span class="b" style="right:361px;top:437px">48 IOPS</span><span class="b" style="right:251px;top:437px">20 ms</span><span class="b" style="right:135px;top:437px;letter-spacing:0.9px">48.075 MB/s</span>
<span class="b" style="right:361px;top:454px">78 IOPS</span><span class="b" style="right:251px;top:454px">12 ms</span><span class="b" style="right:135px;top:454px;letter-spacing:0.9px">39.155 MB/s</span>

<!-- watermark -->
<svg width="240" height="88" style="left:370px;top:410px;z-index:4">
<defs>
<linearGradient id="wg" x1="0" y1="0" x2="0" y2="1"><stop offset="0" stop-color="#ff8a26"/><stop offset=".55" stop-color="#fb4a18"/><stop offset="1" stop-color="#f22a12"/></linearGradient>
</defs>
<g font-family="'DejaVu Sans','Liberation Sans',sans-serif" font-size="23" letter-spacing="1" stroke-linejoin="round" transform="translate(10.600,65.500) scale(1.163,1)"><text fill="#fff" stroke="#fff" stroke-width="3.200" stroke-opacity=".55" fill-opacity=".55">www.svbbs.net</text><text fill="url(#wg)" stroke="url(#wg)" stroke-width="1.300">www.svbbs.net</text></g>
</svg>
<svg width="240" height="60" style="left:370px;top:410px;z-index:6">
<defs>
<linearGradient id="sg" x1="0" y1="0" x2="0" y2="1"><stop offset="0" stop-color="#f4523a"/><stop offset="1" stop-color="#dc2416"/></linearGradient>
<filter id="sh" x="-10%" y="-10%" width="130%" height="130%"><feGaussianBlur stdDeviation="1.300"/></filter>
<linearGradient id="vf" x1="0" y1="0" x2="0" y2="1"><stop offset="0" stop-color="#fff" stop-opacity="0"/><stop offset=".12" stop-color="#fff" stop-opacity="0"/><stop offset=".4" stop-color="#fff" stop-opacity="1"/></linearGradient>
<mask id="vm"><rect x="70" y="0" width="70" height="45" fill="url(#vf)"/></mask>
</defs>
<g font-family="'DejaVu Serif',serif" font-weight="bold" font-size="31.500" letter-spacing="3.200">
<g fill="#444" fill-opacity=".4" filter="url(#sh)"><text transform="translate(57.500,36.500) scale(.88,1)">S</text><text transform="translate(126,36.500) scale(.88,1)">BBS</text></g>
<g fill="#fff" stroke="#fff" stroke-width="4.500" stroke-linejoin="round" opacity=".92"><text transform="translate(55,34) scale(.88,1)">S</text><text transform="translate(123.500,34) scale(.88,1)">BBS</text></g>
<g fill="url(#sg)" stroke="url(#sg)" stroke-width=".9" opacity=".9"><text transform="translate(55,34) scale(.88,1)">S</text><text transform="translate(85,36) scale(1.200,1)" font-family="'Liberation Sans',sans-serif" font-weight="normal" font-size="38" fill-opacity=".1">V</text><text transform="translate(123.500,34) scale(.88,1)">BBS</text></g>
</g>
<g fill="none" stroke-width="4.600" opacity=".95"><path d="M86.500 9l9.500 29.500" stroke="#eed42c"/><path d="M92 9l9.500 29.500" stroke="#c8305c"/><path d="M97.500 15l7 23.500" stroke="#eed42c"/><g mask="url(#vm)"><path d="M114 6l-8 32.500" stroke="#c02858"/><path d="M119.500 6l-8.500 32.500" stroke="#e8c828"/></g></g>
</svg>
</body></html>
